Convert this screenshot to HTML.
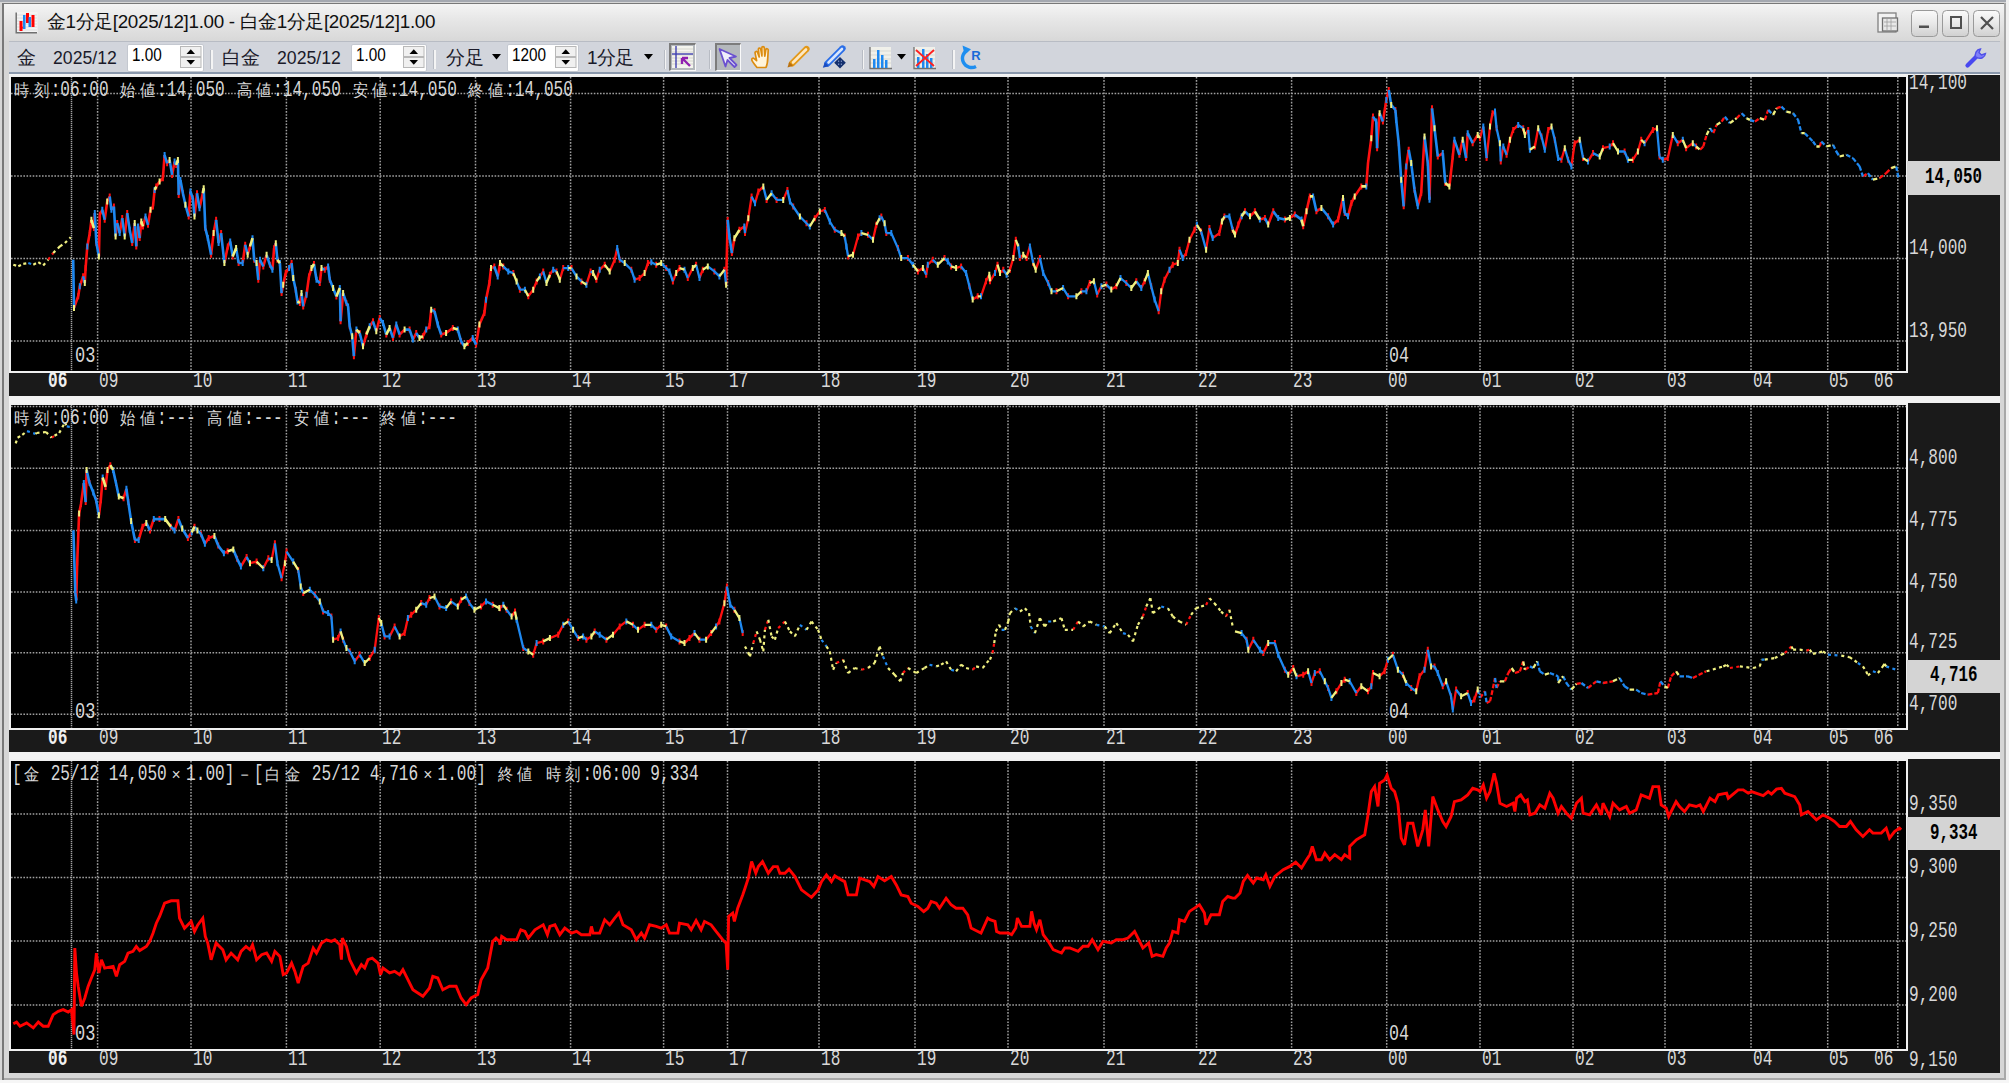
<!DOCTYPE html><html><head><meta charset="utf-8"><style>
*{margin:0;padding:0;box-sizing:border-box}
html,body{width:2009px;height:1083px;overflow:hidden;background:#c9c9c9;position:relative}
.a{position:absolute}
.mono{position:absolute;font-family:"Liberation Mono",monospace;line-height:1;white-space:pre;transform-origin:0 0}
.w2{display:inline-block;width:25.80px;text-align:center;font-size:0.8em;transform:scaleX(1.2);transform-origin:50% 50%}
.ui{position:absolute;font-family:"Liberation Sans",sans-serif;white-space:pre;line-height:1}
</style></head><body>
<div class="a" style="left:0px;top:0px;width:2009px;height:1083px;background:#d6d6d6"></div>
<div class="a" style="left:0px;top:0px;width:2009px;height:2px;background:#a4a8b0"></div>
<div class="a" style="left:2px;top:2.5px;width:2005px;height:1.5px;background:#787878"></div>
<div class="a" style="left:1.5px;top:2.5px;width:2.5px;height:1079px;background:#787878"></div>
<div class="a" style="left:2004px;top:2.5px;width:2px;height:1079px;background:#a8a8a8"></div>
<div class="a" style="left:2006px;top:0px;width:3px;height:1083px;background:#f0f0f0"></div>
<div class="a" style="left:0px;top:1080px;width:2009px;height:3px;background:#f6f6f6"></div>
<div class="a" style="left:4px;top:1078px;width:2001px;height:2px;background:#a8a8a8"></div>
<div class="a" style="left:4px;top:4px;width:2000px;height:37px;background:linear-gradient(#f4f4f4,#e6e6e6 45%,#d8d8d8)"></div>
<div class="a" style="left:9px;top:41px;width:1991px;height:32px;background:#d2d5dc;border-top:1px solid #b8bcc4"></div>
<div class="a" style="left:9px;top:72px;width:1991px;height:1.5px;background:#8a98ac"></div>
<div class="a" style="left:9px;top:73.5px;width:1991px;height:3.5px;background:#f4f4f4"></div>
<div class="a" style="left:9px;top:75px;width:1899px;height:297.5px;background:#f0f0f0"></div>
<div class="a" style="left:11px;top:77px;width:1895px;height:293.5px;background:#000"></div>
<div class="a" style="left:1908px;top:75px;width:92px;height:321px;background:#1a1a1a"></div>
<div class="a" style="left:9px;top:372.5px;width:1991px;height:23.5px;background:#1a1a1a"></div>
<div class="a" style="left:9px;top:396px;width:1991px;height:7px;background:#f2f2f2"></div>
<div class="a" style="left:9px;top:403px;width:1899px;height:326.5px;background:#f0f0f0"></div>
<div class="a" style="left:11px;top:405px;width:1895px;height:322.5px;background:#000"></div>
<div class="a" style="left:1908px;top:403px;width:92px;height:348.5px;background:#1a1a1a"></div>
<div class="a" style="left:9px;top:729.5px;width:1991px;height:22.0px;background:#1a1a1a"></div>
<div class="a" style="left:9px;top:751.5px;width:1991px;height:7px;background:#f2f2f2"></div>
<div class="a" style="left:9px;top:759px;width:1899px;height:291.5px;background:#f0f0f0"></div>
<div class="a" style="left:11px;top:761px;width:1895px;height:287.5px;background:#000"></div>
<div class="a" style="left:1908px;top:759px;width:92px;height:314px;background:#1a1a1a"></div>
<div class="a" style="left:9px;top:1050.5px;width:1991px;height:22.5px;background:#1a1a1a"></div>
<svg class="a" style="left:0;top:0" width="2009" height="1083" viewBox="0 0 2009 1083">
<line x1="11" y1="93.4" x2="1906" y2="93.4" stroke="#a0a0a0" stroke-width="1.5" stroke-dasharray="1.6 1.5"/>
<line x1="11" y1="176" x2="1906" y2="176" stroke="#a0a0a0" stroke-width="1.5" stroke-dasharray="1.6 1.5"/>
<line x1="11" y1="258.6" x2="1906" y2="258.6" stroke="#a0a0a0" stroke-width="1.5" stroke-dasharray="1.6 1.5"/>
<line x1="11" y1="341" x2="1906" y2="341" stroke="#a0a0a0" stroke-width="1.5" stroke-dasharray="1.6 1.5"/>
<line x1="71.5" y1="77" x2="71.5" y2="370.5" stroke="#a0a0a0" stroke-width="1.5" stroke-dasharray="1.2 0.8"/>
<line x1="97.6" y1="77" x2="97.6" y2="370.5" stroke="#a0a0a0" stroke-width="1.5" stroke-dasharray="1.6 1.5"/>
<line x1="191" y1="77" x2="191" y2="370.5" stroke="#a0a0a0" stroke-width="1.5" stroke-dasharray="1.6 1.5"/>
<line x1="286.4" y1="77" x2="286.4" y2="370.5" stroke="#a0a0a0" stroke-width="1.5" stroke-dasharray="1.6 1.5"/>
<line x1="380.2" y1="77" x2="380.2" y2="370.5" stroke="#a0a0a0" stroke-width="1.5" stroke-dasharray="1.6 1.5"/>
<line x1="475.5" y1="77" x2="475.5" y2="370.5" stroke="#a0a0a0" stroke-width="1.5" stroke-dasharray="1.6 1.5"/>
<line x1="570.6" y1="77" x2="570.6" y2="370.5" stroke="#a0a0a0" stroke-width="1.5" stroke-dasharray="1.6 1.5"/>
<line x1="663.6" y1="77" x2="663.6" y2="370.5" stroke="#a0a0a0" stroke-width="1.5" stroke-dasharray="1.6 1.5"/>
<line x1="727.5" y1="77" x2="727.5" y2="370.5" stroke="#a0a0a0" stroke-width="1.5" stroke-dasharray="1.6 1.5"/>
<line x1="819" y1="77" x2="819" y2="370.5" stroke="#a0a0a0" stroke-width="1.5" stroke-dasharray="1.6 1.5"/>
<line x1="915" y1="77" x2="915" y2="370.5" stroke="#a0a0a0" stroke-width="1.5" stroke-dasharray="1.6 1.5"/>
<line x1="1008" y1="77" x2="1008" y2="370.5" stroke="#a0a0a0" stroke-width="1.5" stroke-dasharray="1.6 1.5"/>
<line x1="1104" y1="77" x2="1104" y2="370.5" stroke="#a0a0a0" stroke-width="1.5" stroke-dasharray="1.6 1.5"/>
<line x1="1196.5" y1="77" x2="1196.5" y2="370.5" stroke="#a0a0a0" stroke-width="1.5" stroke-dasharray="1.6 1.5"/>
<line x1="1291.6" y1="77" x2="1291.6" y2="370.5" stroke="#a0a0a0" stroke-width="1.5" stroke-dasharray="1.6 1.5"/>
<line x1="1386.7" y1="77" x2="1386.7" y2="370.5" stroke="#a0a0a0" stroke-width="1.5" stroke-dasharray="1.6 1.5"/>
<line x1="1480" y1="77" x2="1480" y2="370.5" stroke="#a0a0a0" stroke-width="1.5" stroke-dasharray="1.6 1.5"/>
<line x1="1573" y1="77" x2="1573" y2="370.5" stroke="#a0a0a0" stroke-width="1.5" stroke-dasharray="1.6 1.5"/>
<line x1="1665" y1="77" x2="1665" y2="370.5" stroke="#a0a0a0" stroke-width="1.5" stroke-dasharray="1.6 1.5"/>
<line x1="1751" y1="77" x2="1751" y2="370.5" stroke="#a0a0a0" stroke-width="1.5" stroke-dasharray="1.6 1.5"/>
<line x1="1827.7" y1="77" x2="1827.7" y2="370.5" stroke="#a0a0a0" stroke-width="1.5" stroke-dasharray="1.6 1.5"/>
<line x1="1897.8" y1="77" x2="1897.8" y2="370.5" stroke="#a0a0a0" stroke-width="1.5" stroke-dasharray="1.6 1.5"/>
<line x1="11" y1="406.5" x2="1906" y2="406.5" stroke="#a0a0a0" stroke-width="1.5" stroke-dasharray="1.6 1.5"/>
<line x1="11" y1="468.2" x2="1906" y2="468.2" stroke="#a0a0a0" stroke-width="1.5" stroke-dasharray="1.6 1.5"/>
<line x1="11" y1="530.4" x2="1906" y2="530.4" stroke="#a0a0a0" stroke-width="1.5" stroke-dasharray="1.6 1.5"/>
<line x1="11" y1="592" x2="1906" y2="592" stroke="#a0a0a0" stroke-width="1.5" stroke-dasharray="1.6 1.5"/>
<line x1="11" y1="652.8" x2="1906" y2="652.8" stroke="#a0a0a0" stroke-width="1.5" stroke-dasharray="1.6 1.5"/>
<line x1="11" y1="714.3" x2="1906" y2="714.3" stroke="#a0a0a0" stroke-width="1.5" stroke-dasharray="1.6 1.5"/>
<line x1="71.5" y1="405" x2="71.5" y2="727.5" stroke="#a0a0a0" stroke-width="1.5" stroke-dasharray="1.2 0.8"/>
<line x1="97.6" y1="405" x2="97.6" y2="727.5" stroke="#a0a0a0" stroke-width="1.5" stroke-dasharray="1.6 1.5"/>
<line x1="191" y1="405" x2="191" y2="727.5" stroke="#a0a0a0" stroke-width="1.5" stroke-dasharray="1.6 1.5"/>
<line x1="286.4" y1="405" x2="286.4" y2="727.5" stroke="#a0a0a0" stroke-width="1.5" stroke-dasharray="1.6 1.5"/>
<line x1="380.2" y1="405" x2="380.2" y2="727.5" stroke="#a0a0a0" stroke-width="1.5" stroke-dasharray="1.6 1.5"/>
<line x1="475.5" y1="405" x2="475.5" y2="727.5" stroke="#a0a0a0" stroke-width="1.5" stroke-dasharray="1.6 1.5"/>
<line x1="570.6" y1="405" x2="570.6" y2="727.5" stroke="#a0a0a0" stroke-width="1.5" stroke-dasharray="1.6 1.5"/>
<line x1="663.6" y1="405" x2="663.6" y2="727.5" stroke="#a0a0a0" stroke-width="1.5" stroke-dasharray="1.6 1.5"/>
<line x1="727.5" y1="405" x2="727.5" y2="727.5" stroke="#a0a0a0" stroke-width="1.5" stroke-dasharray="1.6 1.5"/>
<line x1="819" y1="405" x2="819" y2="727.5" stroke="#a0a0a0" stroke-width="1.5" stroke-dasharray="1.6 1.5"/>
<line x1="915" y1="405" x2="915" y2="727.5" stroke="#a0a0a0" stroke-width="1.5" stroke-dasharray="1.6 1.5"/>
<line x1="1008" y1="405" x2="1008" y2="727.5" stroke="#a0a0a0" stroke-width="1.5" stroke-dasharray="1.6 1.5"/>
<line x1="1104" y1="405" x2="1104" y2="727.5" stroke="#a0a0a0" stroke-width="1.5" stroke-dasharray="1.6 1.5"/>
<line x1="1196.5" y1="405" x2="1196.5" y2="727.5" stroke="#a0a0a0" stroke-width="1.5" stroke-dasharray="1.6 1.5"/>
<line x1="1291.6" y1="405" x2="1291.6" y2="727.5" stroke="#a0a0a0" stroke-width="1.5" stroke-dasharray="1.6 1.5"/>
<line x1="1386.7" y1="405" x2="1386.7" y2="727.5" stroke="#a0a0a0" stroke-width="1.5" stroke-dasharray="1.6 1.5"/>
<line x1="1480" y1="405" x2="1480" y2="727.5" stroke="#a0a0a0" stroke-width="1.5" stroke-dasharray="1.6 1.5"/>
<line x1="1573" y1="405" x2="1573" y2="727.5" stroke="#a0a0a0" stroke-width="1.5" stroke-dasharray="1.6 1.5"/>
<line x1="1665" y1="405" x2="1665" y2="727.5" stroke="#a0a0a0" stroke-width="1.5" stroke-dasharray="1.6 1.5"/>
<line x1="1751" y1="405" x2="1751" y2="727.5" stroke="#a0a0a0" stroke-width="1.5" stroke-dasharray="1.6 1.5"/>
<line x1="1827.7" y1="405" x2="1827.7" y2="727.5" stroke="#a0a0a0" stroke-width="1.5" stroke-dasharray="1.6 1.5"/>
<line x1="1897.8" y1="405" x2="1897.8" y2="727.5" stroke="#a0a0a0" stroke-width="1.5" stroke-dasharray="1.6 1.5"/>
<line x1="11" y1="814" x2="1906" y2="814" stroke="#a0a0a0" stroke-width="1.5" stroke-dasharray="1.6 1.5"/>
<line x1="11" y1="877.5" x2="1906" y2="877.5" stroke="#a0a0a0" stroke-width="1.5" stroke-dasharray="1.6 1.5"/>
<line x1="11" y1="941" x2="1906" y2="941" stroke="#a0a0a0" stroke-width="1.5" stroke-dasharray="1.6 1.5"/>
<line x1="11" y1="1005" x2="1906" y2="1005" stroke="#a0a0a0" stroke-width="1.5" stroke-dasharray="1.6 1.5"/>
<line x1="71.5" y1="761" x2="71.5" y2="1048.5" stroke="#a0a0a0" stroke-width="1.5" stroke-dasharray="1.2 0.8"/>
<line x1="97.6" y1="761" x2="97.6" y2="1048.5" stroke="#a0a0a0" stroke-width="1.5" stroke-dasharray="1.6 1.5"/>
<line x1="191" y1="761" x2="191" y2="1048.5" stroke="#a0a0a0" stroke-width="1.5" stroke-dasharray="1.6 1.5"/>
<line x1="286.4" y1="761" x2="286.4" y2="1048.5" stroke="#a0a0a0" stroke-width="1.5" stroke-dasharray="1.6 1.5"/>
<line x1="380.2" y1="761" x2="380.2" y2="1048.5" stroke="#a0a0a0" stroke-width="1.5" stroke-dasharray="1.6 1.5"/>
<line x1="475.5" y1="761" x2="475.5" y2="1048.5" stroke="#a0a0a0" stroke-width="1.5" stroke-dasharray="1.6 1.5"/>
<line x1="570.6" y1="761" x2="570.6" y2="1048.5" stroke="#a0a0a0" stroke-width="1.5" stroke-dasharray="1.6 1.5"/>
<line x1="663.6" y1="761" x2="663.6" y2="1048.5" stroke="#a0a0a0" stroke-width="1.5" stroke-dasharray="1.6 1.5"/>
<line x1="727.5" y1="761" x2="727.5" y2="1048.5" stroke="#a0a0a0" stroke-width="1.5" stroke-dasharray="1.6 1.5"/>
<line x1="819" y1="761" x2="819" y2="1048.5" stroke="#a0a0a0" stroke-width="1.5" stroke-dasharray="1.6 1.5"/>
<line x1="915" y1="761" x2="915" y2="1048.5" stroke="#a0a0a0" stroke-width="1.5" stroke-dasharray="1.6 1.5"/>
<line x1="1008" y1="761" x2="1008" y2="1048.5" stroke="#a0a0a0" stroke-width="1.5" stroke-dasharray="1.6 1.5"/>
<line x1="1104" y1="761" x2="1104" y2="1048.5" stroke="#a0a0a0" stroke-width="1.5" stroke-dasharray="1.6 1.5"/>
<line x1="1196.5" y1="761" x2="1196.5" y2="1048.5" stroke="#a0a0a0" stroke-width="1.5" stroke-dasharray="1.6 1.5"/>
<line x1="1291.6" y1="761" x2="1291.6" y2="1048.5" stroke="#a0a0a0" stroke-width="1.5" stroke-dasharray="1.6 1.5"/>
<line x1="1386.7" y1="761" x2="1386.7" y2="1048.5" stroke="#a0a0a0" stroke-width="1.5" stroke-dasharray="1.6 1.5"/>
<line x1="1480" y1="761" x2="1480" y2="1048.5" stroke="#a0a0a0" stroke-width="1.5" stroke-dasharray="1.6 1.5"/>
<line x1="1573" y1="761" x2="1573" y2="1048.5" stroke="#a0a0a0" stroke-width="1.5" stroke-dasharray="1.6 1.5"/>
<line x1="1665" y1="761" x2="1665" y2="1048.5" stroke="#a0a0a0" stroke-width="1.5" stroke-dasharray="1.6 1.5"/>
<line x1="1751" y1="761" x2="1751" y2="1048.5" stroke="#a0a0a0" stroke-width="1.5" stroke-dasharray="1.6 1.5"/>
<line x1="1827.7" y1="761" x2="1827.7" y2="1048.5" stroke="#a0a0a0" stroke-width="1.5" stroke-dasharray="1.6 1.5"/>
<line x1="1897.8" y1="761" x2="1897.8" y2="1048.5" stroke="#a0a0a0" stroke-width="1.5" stroke-dasharray="1.6 1.5"/>
<clipPath id="c1"><rect x="11" y="77" width="1895" height="293.5"/></clipPath>
<clipPath id="c2"><rect x="11" y="405" width="1895" height="322.5"/></clipPath>
<clipPath id="c3"><rect x="11" y="761" width="1895" height="287.5"/></clipPath>
<g clip-path="url(#c1)"><path d="M74.0 307.9L78.2 296.2M78.2 296.2L79.8 286.3M79.8 286.3L83.1 276.3M84.8 283.0L85.6 268.0M85.6 268.0L87.3 246.4M87.3 246.4L89.8 233.1M89.8 233.1L91.4 219.8M93.9 228.1L94.8 213.1M98.9 256.4L99.8 214.8M99.8 214.8L102.3 209.8M104.7 219.8L107.2 201.5M107.2 201.5L109.7 196.5M111.4 209.8L113.9 206.5M115.6 236.4L117.2 223.1M119.7 233.1L122.2 218.1M124.7 236.4L127.2 213.1M132.2 243.1L134.7 223.1M136.3 246.4L138.0 226.4M139.7 238.1L141.3 221.4M143.0 226.4L145.5 216.5M148.0 224.8L150.5 209.8M150.5 209.8L153.0 206.5M153.0 206.5L154.6 189.9M156.3 186.5L159.6 181.6M159.6 181.6L162.9 178.2M162.9 178.2L164.6 155.0M167.1 163.3L169.6 159.9M172.1 174.9L174.6 161.6M178.7 194.9L180.4 179.9M188.7 216.5L190.4 191.5M194.5 216.5L197.0 193.2M199.5 208.2L202.8 193.2M211.1 254.7L213.6 233.1M213.6 233.1L216.1 219.8M218.6 243.1L221.1 233.1M224.4 263.0L227.8 246.4M227.8 246.4L230.2 241.4M242.7 263.0L245.2 244.7M247.7 254.7L250.0 246.5M258.3 279.8L260.0 259.8M263.3 266.5L266.6 254.8M272.4 269.8L274.1 248.2M274.1 248.2L275.8 243.2M281.6 293.1L283.2 284.7M283.2 284.7L285.7 273.1M285.7 273.1L289.1 268.1M289.1 268.1L291.6 263.1M299.9 303.0L301.5 293.1M303.2 306.4L306.5 294.7M306.5 294.7L309.0 276.4M309.0 276.4L311.5 268.1M319.8 283.1L321.5 268.1M324.8 269.8L328.1 266.5M340.6 321.3L343.1 293.1M353.9 356.2L356.4 329.6M363.0 346.2L366.4 334.6M369.7 326.3L373.0 321.3M376.3 331.3L379.7 318.0M393.0 337.9L396.3 324.6M399.6 334.6L404.6 329.6M412.9 339.6L416.2 333.0M422.9 336.3L426.2 329.6M426.2 329.6L429.5 326.3M429.5 326.3L431.2 309.7M441.2 334.6L446.1 333.0M446.1 333.0L452.8 328.0M467.8 342.9L472.7 337.9M476.1 344.6L479.4 324.6M479.4 324.6L484.4 313.0M484.4 313.0L486.0 299.7M486.0 299.7L489.4 283.1M489.4 283.1L491.0 268.1M491.0 268.1L494.3 266.5M497.7 276.4L499.3 268.1M726.1 284.7L727.7 219.9M731.9 253.1L734.4 238.2M739.4 229.8L744.3 226.5M1235.0 234.6L1238.3 224.6M1238.3 224.6L1241.6 216.3M1250.0 216.3L1254.9 211.3M1259.9 219.6L1264.9 218.0M1268.2 224.6L1273.2 211.3M1289.9 218.0L1294.8 214.6M1303.2 226.3L1306.5 211.3M1306.5 211.3L1309.8 196.4M1316.4 211.3L1321.4 208.0M1333.1 224.6L1338.1 219.6M1338.1 219.6L1343.0 198.0M1348.0 216.3L1351.4 203.0M1351.4 203.0L1354.7 196.4M1354.7 196.4L1361.3 186.4M1366.3 186.4L1368.0 163.1M1368.0 163.1L1371.3 138.2M1371.3 138.2L1373.0 116.6M1377.1 148.2L1379.6 113.2M1382.9 121.6L1386.3 99.9M1386.3 99.9L1388.8 90.0M1403.7 206.3L1406.2 166.4M1406.2 166.4L1408.7 149.8M1417.8 206.3L1421.2 193.0M1421.2 193.0L1424.5 136.5M1429.5 199.7L1432.0 108.3M1437.8 156.5L1442.8 153.1M1449.4 186.4L1452.8 156.5M1452.8 156.5L1454.4 139.8M1459.4 154.8L1462.7 139.8M1466.1 158.1L1467.7 133.2M1472.7 143.2L1477.7 134.9" fill="none" stroke="#ff1010" stroke-width="2.6" stroke-linejoin="miter" stroke-linecap="butt"/>
<path d="M499.3 268.1L500.0 263.1M528.3 296.3L533.2 289.7M533.2 289.7L536.6 281.4M539.9 276.4L543.2 271.4M549.9 274.7L553.2 269.7M559.8 279.7L563.2 268.1M586.4 284.7L590.6 271.4M596.4 279.7L599.7 269.7M599.7 269.7L604.7 264.7M609.7 271.4L614.7 259.8M614.7 259.8L617.2 248.1M634.6 279.7L639.6 278.0M639.6 278.0L644.6 273.1M644.6 273.1L647.9 263.1M647.9 263.1L651.3 262.3M672.9 281.4L676.2 273.1M676.2 273.1L679.5 268.1M687.8 278.0L692.8 268.1M699.5 278.0L702.8 269.7M745.0 233.1L748.3 218.2M748.3 218.2L751.6 196.6M755.0 203.2L758.3 191.6M758.3 191.6L763.3 186.6M783.2 199.9L787.4 189.9M814.8 218.2L819.8 211.5M819.8 211.5L824.8 209.9M853.0 254.7L858.0 236.5M858.0 236.5L861.4 233.1M873.0 239.8L876.3 224.8M879.6 218.2L881.3 216.5M917.9 271.4L922.9 268.0M926.2 274.7L927.8 264.7M927.8 264.7L932.8 259.7M956.1 268.0L961.1 266.4M972.7 299.6L977.7 296.3M981.0 296.3L986.0 281.3M986.0 281.3L989.3 274.7M990.0 281.3L995.0 273.0M995.0 273.0L997.5 264.7M1000.0 273.0L1003.3 269.7M1009.9 269.7L1013.3 258.0M1013.3 258.0L1015.8 239.8M1019.9 258.0L1023.2 254.7M1026.6 258.0L1029.9 246.4M1035.7 269.7L1039.9 258.0M1086.4 291.3L1089.7 283.0M1097.2 294.6L1101.4 286.3M1111.3 289.6L1116.3 286.3M1141.3 288.0L1144.6 281.3M1158.7 311.2L1161.2 291.3M1161.2 291.3L1164.5 279.7M1164.5 279.7L1169.5 269.7M1169.5 269.7L1172.8 264.7M1172.8 264.7L1177.8 263.0M1177.8 263.0L1179.5 249.7M1182.8 258.0L1186.1 253.1M1186.1 253.1L1189.5 239.8M1189.5 239.8L1194.5 229.8M1194.5 229.8L1196.9 224.8M1206.1 249.7L1209.4 228.1M1212.7 238.1L1219.4 233.1M1219.4 233.1L1221.9 221.5M1480.0 138.2L1483.3 126.5M1486.6 158.1L1490.0 126.5M1490.0 126.5L1492.5 113.2M1492.5 113.2L1495.0 111.6M1500.8 161.4L1503.3 146.5M1506.6 154.8L1509.9 139.8M1509.9 139.8L1513.2 129.9M1513.2 129.9L1518.2 124.9M1524.9 134.9L1528.2 129.9M1534.9 146.5L1538.2 128.2M1544.8 149.8L1548.2 129.9M1548.2 129.9L1551.5 126.5M1561.4 159.8L1564.8 148.2M1571.4 166.4L1574.7 143.2M1574.7 143.2L1579.7 139.8M1588.0 161.4L1593.0 153.1M1603.0 148.2L1609.7 146.5M1609.7 146.5L1613.0 143.2M1632.9 159.8L1637.9 151.5M1637.9 151.5L1641.2 139.8M1644.6 143.2L1652.9 129.9M1652.9 129.9L1657.0 128.2M1662.8 159.8L1667.8 158.1M1667.8 158.1L1672.8 134.9M1677.8 143.2L1682.8 139.8M1686.1 148.2L1692.8 143.2" fill="none" stroke="#ff1010" stroke-width="2.3" stroke-linejoin="miter" stroke-linecap="butt"/>
<path d="M1700.0 149.8L1703.3 146.5M1703.3 146.5L1706.6 134.9M1713.3 133.2L1716.6 124.9M1721.6 121.6L1724.9 116.6M1736.6 118.2L1741.6 113.2M1754.9 121.6L1759.8 118.2M1764.8 119.9L1768.2 109.9M1776.5 108.3L1781.4 106.6M1819.7 146.5L1821.3 141.5M1862.9 176.4L1867.9 173.1M1879.5 178.1L1886.2 173.1M1886.2 173.1L1891.2 168.1" fill="none" stroke="#ff1010" stroke-width="2.3" stroke-dasharray="4.5 2" stroke-linejoin="miter" stroke-linecap="butt"/>
<path d="M48.2 259.7L53.2 253.0" fill="none" stroke="#ff1010" stroke-width="2.2" stroke-dasharray="3 3.5" stroke-linejoin="miter" stroke-linecap="butt"/>
<path d="M78.2 293.2V299.2M83.1 273.3V279.3M85.6 265.0V271.0M89.8 230.1V236.1M93.9 225.1V231.1M96.4 240.1V246.1M99.8 211.8V217.8M104.7 216.8V222.8M109.7 193.5V199.5M113.9 203.5V209.5M117.2 220.1V226.1M122.2 215.1V221.1M127.2 210.1V216.1M132.2 240.1V246.1M136.3 243.4V249.4M139.7 235.1V241.1M143.0 223.4V229.4M148.0 221.8V227.8M153.0 203.5V209.5M156.3 183.5V189.5M162.9 175.2V181.2M167.1 160.3V166.3M172.1 171.9V177.9M176.2 161.9V167.9M178.7 191.9V197.9M182.9 190.2V196.2M188.7 213.5V219.5M192.8 195.2V201.2M197.0 190.2V196.2M202.8 190.2V196.2M205.3 225.1V231.1M211.1 251.7V257.7M216.1 216.8V222.8M221.1 230.1V236.1M227.8 243.4V249.4M232.7 253.4V259.4M238.6 260.0V266.0M245.2 241.7V247.7M250.0 243.5V249.5M254.2 256.8V262.8M258.3 276.8V282.8M263.3 263.5V269.5M269.9 261.8V267.8M274.1 245.2V251.2M277.4 256.8V262.8M281.6 290.1V296.1M285.7 270.1V276.1M291.6 260.1V266.1M295.7 286.7V292.7M299.9 300.0V306.0M303.2 303.4V309.4M309.0 273.4V279.4M314.0 261.0V267.0M319.8 280.1V286.1M324.8 266.8V272.8M329.8 276.8V282.8M336.4 293.4V299.4M340.6 318.3V324.3M346.4 300.0V306.0M349.7 323.3V329.3M353.9 353.2V359.2M359.7 330.0V336.0M366.4 331.6V337.6M373.0 318.3V324.3M379.7 315.0V321.0M386.3 331.6V337.6M393.0 334.9V340.9M399.6 331.6V337.6M409.6 326.6V332.6M416.2 330.0V336.0M422.9 333.3V339.3M429.5 323.3V329.3M434.5 308.3V314.3M441.2 331.6V337.6M452.8 325.0V331.0M461.1 338.3V344.3M467.8 339.9V345.9M476.1 341.6V347.6M484.4 310.0V316.0M489.4 280.1V286.1M494.3 263.5V269.5M499.3 265.1V271.1M503.3 263.4V269.4M513.3 270.1V276.1M519.9 286.7V292.7M528.3 293.3V299.3M536.6 278.4V284.4M543.2 268.4V274.4M549.9 271.7V277.7M556.5 268.4V274.4M563.2 265.1V271.1M571.5 265.1V271.1M581.4 278.4V284.4M590.6 268.4V274.4M596.4 276.7V282.7M604.7 261.7V267.7M614.7 256.8V262.8M619.7 256.8V262.8M631.3 266.7V272.7M639.6 275.0V281.0M647.9 260.1V266.1M656.2 261.7V267.7M666.2 265.1V271.1M672.9 278.4V284.4M679.5 265.1V271.1M687.8 275.0V281.0M696.1 261.7V267.7M702.8 266.7V272.7M714.4 268.4V274.4M724.4 266.7V272.7M727.7 216.9V222.9M731.9 250.1V256.1M739.4 226.8V232.8M745.0 230.1V236.1M751.6 193.6V199.6M758.3 188.6V194.6M766.6 196.9V202.9M776.6 196.9V202.9M787.4 186.9V192.9M793.2 203.5V209.5M806.5 220.2V226.2M814.8 215.2V221.2M824.8 206.9V212.9M834.8 226.8V232.8M844.7 233.5V239.5M848.1 253.4V259.4M858.0 233.5V239.5M868.0 231.8V237.8M876.3 221.8V227.8M881.3 213.5V219.5M886.3 230.1V236.1M897.9 245.1V251.1M907.9 255.1V261.1M917.9 268.4V274.4M926.2 271.7V277.7M932.8 256.7V262.7M944.5 255.1V261.1M951.1 263.4V269.4M961.1 263.4V269.4M969.4 283.3V289.3M977.7 293.3V299.3M986.0 278.3V284.3M990.0 278.3V284.3M997.5 261.7V267.7M1003.3 266.7V272.7M1009.9 266.7V272.7M1015.8 236.8V242.8M1019.9 255.0V261.0M1026.6 255.0V261.0M1033.2 260.0V266.0M1039.9 255.0V261.0M1048.2 280.0V286.0M1056.5 288.3V294.3M1068.1 293.3V299.3M1081.4 288.3V294.3M1089.7 280.0V286.0M1097.2 291.6V297.6M1106.4 281.6V287.6M1116.3 283.3V289.3M1126.3 280.0V286.0M1136.3 278.3V284.3M1144.6 278.3V284.3M1151.2 283.3V289.3M1158.7 308.2V314.2M1164.5 276.7V282.7M1172.8 261.7V267.7M1179.5 246.7V252.7M1186.1 250.1V256.1M1194.5 226.8V232.8M1201.1 228.4V234.4M1209.4 225.1V231.1M1219.4 230.1V236.1M1224.4 213.5V219.5M1232.7 226.8V232.8M1238.3 221.6V227.6M1245.0 208.3V214.3M1254.9 208.3V214.3M1264.9 215.0V221.0M1273.2 208.3V214.3M1284.9 216.6V222.6M1294.8 211.6V217.6M1303.2 223.3V229.3M1309.8 193.4V199.4M1316.4 208.3V214.3M1328.1 213.3V219.3M1338.1 216.6V222.6M1344.7 210.0V216.0M1351.4 200.0V206.0M1361.3 183.4V189.4M1368.0 160.1V166.1M1373.0 113.6V119.6M1377.1 145.2V151.2M1382.9 118.6V124.6M1388.8 87.0V93.0M1395.4 106.9V112.9M1398.7 140.2V146.2M1403.7 203.3V209.3M1408.7 146.8V152.8M1414.5 186.7V192.7M1421.2 190.0V196.0M1427.8 160.1V166.1M1432.0 105.3V111.3M1437.8 153.5V159.5M1445.3 180.1V186.1M1452.8 153.5V159.5M1459.4 151.8V157.8M1466.1 155.1V161.1M1472.7 140.2V146.2M1480.0 135.2V141.2M1486.6 155.1V161.1M1492.5 110.2V116.2M1496.6 125.2V131.2M1500.8 158.4V164.4M1506.6 151.8V157.8M1513.2 126.9V132.9M1523.2 125.2V131.2M1528.2 126.9V132.9M1534.9 143.5V149.5M1541.5 133.5V139.5M1548.2 126.9V132.9M1554.8 136.8V142.8M1561.4 156.8V162.8M1568.1 156.8V162.8M1574.7 140.2V146.2M1583.1 155.1V161.1M1593.0 150.1V156.1M1603.0 145.2V151.2M1613.0 140.2V146.2M1624.6 148.5V154.5M1632.9 156.8V162.8M1641.2 136.8V142.8M1652.9 126.9V132.9M1659.5 153.5V159.5M1667.8 155.1V161.1M1677.8 140.2V146.2M1686.1 145.2V151.2M1696.1 143.5V149.5" fill="none" stroke="#ff1010" stroke-width="2" stroke-linejoin="miter" stroke-linecap="butt"/>
<path d="M73.2 259.7L74.0 307.9M83.1 276.3L84.8 283.0M94.8 213.1L96.4 243.1M96.4 243.1L98.9 256.4M102.3 209.8L104.7 219.8M109.7 196.5L111.4 209.8M113.9 206.5L115.6 236.4M117.2 223.1L119.7 233.1M122.2 218.1L124.7 236.4M127.2 213.1L129.7 229.8M129.7 229.8L132.2 243.1M134.7 223.1L136.3 246.4M138.0 226.4L139.7 238.1M145.5 216.5L148.0 224.8M164.6 155.0L167.1 163.3M169.6 159.9L172.1 174.9M174.6 161.6L176.2 164.9M177.9 159.9L178.7 194.9M180.4 179.9L182.9 193.2M182.9 193.2L185.4 204.8M185.4 204.8L188.7 216.5M190.4 191.5L192.8 198.2M192.8 198.2L194.5 216.5M197.0 193.2L199.5 208.2M203.7 188.2L205.3 228.1M205.3 228.1L207.8 238.1M207.8 238.1L211.1 254.7M216.1 219.8L218.6 243.1M221.1 233.1L224.4 263.0M230.2 241.4L232.7 256.4M236.1 248.0L238.6 263.0M238.6 263.0L242.7 263.0M245.2 244.7L247.7 254.7M252.5 238.2L254.2 259.8M254.2 259.8L256.6 263.1M256.6 263.1L258.3 279.8M260.0 259.8L263.3 266.5M266.6 254.8L269.9 264.8M269.9 264.8L272.4 269.8M275.8 243.2L277.4 259.8M279.9 263.1L281.6 293.1M291.6 263.1L293.2 278.1M293.2 278.1L295.7 289.7M295.7 289.7L297.4 301.4M301.5 293.1L303.2 306.4M314.0 264.0L316.5 279.8M316.5 279.8L319.8 283.1M321.5 268.1L324.8 269.8M328.1 266.5L329.8 279.8M329.8 279.8L333.1 288.1M333.1 288.1L336.4 296.4M339.8 288.1L340.6 321.3M343.1 293.1L346.4 303.0M346.4 303.0L348.1 306.4M348.1 306.4L349.7 326.3M349.7 326.3L352.2 336.3M352.2 336.3L353.9 356.2M359.7 333.0L363.0 346.2M373.0 321.3L376.3 331.3M379.7 318.0L383.0 323.0M383.0 323.0L386.3 334.6M389.6 328.0L393.0 337.9M396.3 324.6L399.6 334.6M404.6 329.6L409.6 329.6M409.6 329.6L412.9 339.6M416.2 333.0L419.5 337.9M431.2 309.7L434.5 311.3M434.5 311.3L437.8 324.6M437.8 324.6L441.2 334.6M457.8 329.6L461.1 341.3M461.1 341.3L464.4 346.2M472.7 337.9L476.1 344.6M494.3 266.5L497.7 276.4M727.7 219.9L729.4 236.5M729.4 236.5L731.9 253.1M1245.0 211.3L1250.0 216.3M1264.9 218.0L1268.2 224.6M1273.2 211.3L1278.2 218.0M1278.2 218.0L1284.9 219.6M1294.8 214.6L1301.5 219.6M1313.1 196.4L1316.4 211.3M1321.4 208.0L1328.1 216.3M1328.1 216.3L1333.1 224.6M1343.0 198.0L1344.7 213.0M1344.7 213.0L1348.0 216.3M1373.0 116.6L1376.3 121.6M1376.3 121.6L1377.1 148.2M1379.6 113.2L1382.9 121.6M1388.8 90.0L1391.2 104.9M1391.2 104.9L1395.4 109.9M1395.4 109.9L1396.2 119.9M1396.2 119.9L1398.7 143.2M1398.7 143.2L1401.2 179.7M1401.2 179.7L1403.7 206.3M1408.7 149.8L1411.2 163.1M1411.2 163.1L1414.5 189.7M1414.5 189.7L1417.8 206.3M1424.5 136.5L1427.8 163.1M1427.8 163.1L1429.5 199.7M1432.0 108.3L1434.5 128.2M1434.5 128.2L1437.8 156.5M1442.8 153.1L1445.3 183.1M1454.4 139.8L1459.4 154.8M1462.7 139.8L1466.1 158.1M1467.7 133.2L1472.7 143.2" fill="none" stroke="#1e88f0" stroke-width="2.6" stroke-linejoin="miter" stroke-linecap="butt"/>
<path d="M503.3 266.4L508.3 271.4M508.3 271.4L513.3 273.1M516.6 281.4L519.9 289.7M519.9 289.7L524.9 289.7M543.2 271.4L546.5 283.0M553.2 269.7L556.5 271.4M563.2 268.1L568.2 268.1M571.5 268.1L576.5 276.4M576.5 276.4L581.4 281.4M590.6 271.4L593.1 273.1M617.2 248.1L619.7 259.8M619.7 259.8L624.7 263.1M624.7 263.1L631.3 269.7M631.3 269.7L634.6 279.7M651.3 262.3L656.2 264.7M661.2 263.1L666.2 268.1M666.2 268.1L669.5 271.4M669.5 271.4L672.9 281.4M684.5 269.7L687.8 278.0M696.1 264.7L699.5 278.0M707.8 266.4L714.4 271.4M714.4 271.4L719.4 276.4M724.4 269.7L726.1 284.7M744.3 226.5L745.0 233.1M751.6 196.6L755.0 203.2M763.3 186.6L766.6 199.9M771.6 193.2L776.6 199.9M776.6 199.9L783.2 199.9M787.4 189.9L789.9 201.6M789.9 201.6L793.2 206.5M793.2 206.5L799.9 216.5M799.9 216.5L806.5 223.2M806.5 223.2L809.8 226.5M824.8 209.9L829.8 221.5M829.8 221.5L834.8 229.8M834.8 229.8L841.4 233.1M844.7 236.5L846.4 246.4M846.4 246.4L848.1 256.4M868.0 234.8L873.0 239.8M881.3 216.5L884.6 223.2M884.6 223.2L886.3 233.1M886.3 233.1L891.3 233.1M891.3 233.1L897.9 248.1M897.9 248.1L901.2 258.1M901.2 258.1L907.9 258.1M907.9 258.1L912.9 264.7M922.9 268.0L926.2 274.7M932.8 259.7L937.8 264.7M944.5 258.1L947.8 261.4M947.8 261.4L951.1 266.4M961.1 266.4L966.1 273.0M966.1 273.0L969.4 286.3M969.4 286.3L972.7 299.6M1003.3 269.7L1006.6 274.7M1018.3 246.4L1019.9 258.0M1029.9 246.4L1033.2 263.0M1039.9 258.0L1043.2 273.0M1043.2 273.0L1048.2 283.0M1048.2 283.0L1051.5 291.3M1051.5 291.3L1056.5 291.3M1063.1 288.0L1068.1 296.3M1068.1 296.3L1076.4 296.3M1081.4 291.3L1086.4 291.3M1093.9 281.3L1097.2 294.6M1106.4 284.6L1111.3 289.6M1120.5 278.0L1126.3 283.0M1126.3 283.0L1131.3 288.0M1136.3 281.3L1141.3 288.0M1147.9 273.0L1151.2 286.3M1151.2 286.3L1154.6 299.6M1154.6 299.6L1158.7 311.2M1179.5 249.7L1182.8 258.0M1201.1 231.4L1206.1 249.7M1209.4 228.1L1212.7 238.1M1224.4 216.5L1229.4 216.5M1229.4 216.5L1232.7 229.8M1483.3 126.5L1486.6 158.1M1495.0 111.6L1496.6 128.2M1496.6 128.2L1499.9 143.2M1499.9 143.2L1500.8 161.4M1503.3 146.5L1506.6 154.8M1518.2 124.9L1523.2 128.2M1528.2 129.9L1529.9 149.8M1538.2 128.2L1541.5 136.5M1541.5 136.5L1544.8 149.8M1551.5 126.5L1554.8 139.8M1554.8 139.8L1558.1 158.1M1558.1 158.1L1561.4 159.8M1564.8 148.2L1568.1 159.8M1568.1 159.8L1571.4 166.4M1579.7 139.8L1583.1 158.1M1593.0 153.1L1599.7 156.5M1618.0 151.5L1624.6 151.5M1624.6 151.5L1627.9 159.8M1657.0 128.2L1659.5 156.5M1659.5 156.5L1662.8 159.8M1672.8 134.9L1677.8 143.2M1692.8 143.2L1696.1 146.5" fill="none" stroke="#1e88f0" stroke-width="2.3" stroke-linejoin="miter" stroke-linecap="butt"/>
<path d="M1710.0 128.2L1713.3 133.2M1724.9 116.6L1729.9 123.2M1741.6 113.2L1746.5 118.2M1749.9 119.9L1754.9 121.6M1768.2 109.9L1773.1 114.9M1781.4 106.6L1786.4 111.6M1793.1 113.2L1798.1 119.9M1798.1 119.9L1801.4 133.2M1804.7 133.2L1813.0 141.5M1813.0 141.5L1816.4 146.5M1821.3 141.5L1826.3 146.5M1833.0 144.8L1836.3 151.5M1836.3 151.5L1839.6 156.5M1846.3 154.8L1852.9 158.1M1852.9 158.1L1859.6 166.4M1859.6 166.4L1862.9 176.4M1867.9 173.1L1872.9 179.7M1896.1 166.4L1898.6 178.1" fill="none" stroke="#1e88f0" stroke-width="2.3" stroke-dasharray="4.5 2" stroke-linejoin="miter" stroke-linecap="butt"/>
<path d="M28.3 263.0L33.3 264.7" fill="none" stroke="#1e88f0" stroke-width="2.2" stroke-dasharray="3 3.5" stroke-linejoin="miter" stroke-linecap="butt"/>
<path d="M79.8 283.3V289.3M87.3 243.4V249.4M94.8 210.1V216.1M102.3 206.8V212.8M111.4 206.8V212.8M119.7 230.1V236.1M129.7 226.8V232.8M138.0 223.4V229.4M145.5 213.5V219.5M154.6 186.9V192.9M164.6 152.0V158.0M174.6 158.6V164.6M180.4 176.9V182.9M190.4 188.5V194.5M199.5 205.2V211.2M207.8 235.1V241.1M218.6 240.1V246.1M230.2 238.4V244.4M242.7 260.0V266.0M252.5 235.2V241.2M260.0 256.8V262.8M272.4 266.8V272.8M279.9 260.1V266.1M289.1 265.1V271.1M297.4 298.4V304.4M306.5 291.7V297.7M316.5 276.8V282.8M328.1 263.5V269.5M339.8 285.1V291.1M348.1 303.4V309.4M356.4 326.6V332.6M369.7 323.3V329.3M383.0 320.0V326.0M396.3 321.6V327.6M412.9 336.6V342.6M426.2 326.6V332.6M437.8 321.6V327.6M457.8 326.6V332.6M472.7 334.9V340.9M486.0 296.7V302.7M497.7 273.4V279.4M508.3 268.4V274.4M524.9 286.7V292.7M539.9 273.4V279.4M553.2 266.7V272.7M568.2 265.1V271.1M586.4 281.7V287.7M599.7 266.7V272.7M617.2 245.1V251.1M634.6 276.7V282.7M651.3 259.3V265.3M669.5 268.4V274.4M684.5 266.7V272.7M699.5 275.0V281.0M719.4 273.4V279.4M729.4 233.5V239.5M744.3 223.5V229.5M755.0 200.2V206.2M771.6 190.2V196.2M789.9 198.6V204.6M809.8 223.5V229.5M829.8 218.5V224.5M846.4 243.4V249.4M861.4 230.1V236.1M879.6 215.2V221.2M891.3 230.1V236.1M912.9 261.7V267.7M927.8 261.7V267.7M947.8 258.4V264.4M966.1 270.0V276.0M981.0 293.3V299.3M995.0 270.0V276.0M1006.6 271.7V277.7M1018.3 243.4V249.4M1029.9 243.4V249.4M1043.2 270.0V276.0M1063.1 285.0V291.0M1086.4 288.3V294.3M1101.4 283.3V289.3M1120.5 275.0V281.0M1141.3 285.0V291.0M1154.6 296.6V302.6M1169.5 266.7V272.7M1182.8 255.0V261.0M1196.9 221.8V227.8M1212.7 235.1V241.1M1229.4 213.5V219.5M1241.6 213.3V219.3M1259.9 216.6V222.6M1278.2 215.0V221.0M1301.5 216.6V222.6M1313.1 193.4V199.4M1333.1 221.6V227.6M1348.0 213.3V219.3M1366.3 183.4V189.4M1376.3 118.6V124.6M1386.3 96.9V102.9M1396.2 116.9V122.9M1406.2 163.4V169.4M1417.8 203.3V209.3M1429.5 196.7V202.7M1442.8 150.1V156.1M1454.4 136.8V142.8M1467.7 130.2V136.2M1483.3 123.5V129.5M1495.0 108.6V114.6M1503.3 143.5V149.5M1518.2 121.9V127.9M1529.9 146.8V152.8M1544.8 146.8V152.8M1558.1 155.1V161.1M1571.4 163.4V169.4M1588.0 158.4V164.4M1609.7 143.5V149.5M1627.9 156.8V162.8M1644.6 140.2V146.2M1662.8 156.8V162.8M1682.8 136.8V142.8" fill="none" stroke="#1e88f0" stroke-width="2" stroke-linejoin="miter" stroke-linecap="butt"/>
<path d="M91.4 219.8L93.9 228.1M141.3 221.4L143.0 226.4M154.6 189.9L156.3 186.5M176.2 164.9L177.9 159.9M202.8 193.2L203.7 188.2M232.7 256.4L236.1 248.0M250.0 246.5L252.5 238.2M277.4 259.8L279.9 263.1M297.4 301.4L299.9 303.0M311.5 268.1L314.0 264.0M336.4 296.4L339.8 288.1M356.4 329.6L359.7 333.0M366.4 334.6L369.7 326.3M386.3 334.6L389.6 328.0M419.5 337.9L422.9 336.3M452.8 328.0L457.8 329.6M464.4 346.2L467.8 342.9M734.4 238.2L739.4 229.8M1232.7 229.8L1235.0 234.6M1241.6 216.3L1245.0 211.3M1254.9 211.3L1259.9 219.6M1284.9 219.6L1289.9 218.0M1301.5 219.6L1303.2 226.3M1309.8 196.4L1313.1 196.4M1361.3 186.4L1366.3 186.4M1445.3 183.1L1449.4 186.4" fill="none" stroke="#f0f080" stroke-width="2.6" stroke-linejoin="miter" stroke-linecap="butt"/>
<path d="M500.0 263.1L503.3 266.4M513.3 273.1L516.6 281.4M524.9 289.7L528.3 296.3M536.6 281.4L539.9 276.4M546.5 283.0L549.9 274.7M556.5 271.4L559.8 279.7M568.2 268.1L571.5 268.1M581.4 281.4L586.4 284.7M593.1 273.1L596.4 279.7M604.7 264.7L609.7 271.4M656.2 264.7L661.2 263.1M679.5 268.1L684.5 269.7M692.8 268.1L696.1 264.7M702.8 269.7L707.8 266.4M719.4 276.4L724.4 269.7M766.6 199.9L771.6 193.2M809.8 226.5L814.8 218.2M841.4 233.1L844.7 236.5M848.1 256.4L853.0 254.7M861.4 233.1L868.0 234.8M876.3 224.8L879.6 218.2M912.9 264.7L917.9 271.4M937.8 264.7L944.5 258.1M951.1 266.4L956.1 268.0M977.7 296.3L981.0 296.3M989.3 274.7L990.0 281.3M997.5 264.7L1000.0 273.0M1006.6 274.7L1009.9 269.7M1015.8 239.8L1018.3 246.4M1023.2 254.7L1026.6 258.0M1033.2 263.0L1035.7 269.7M1056.5 291.3L1063.1 288.0M1076.4 296.3L1081.4 291.3M1089.7 283.0L1093.9 281.3M1101.4 286.3L1106.4 284.6M1116.3 286.3L1120.5 278.0M1131.3 288.0L1136.3 281.3M1144.6 281.3L1147.9 273.0M1196.9 224.8L1201.1 231.4M1221.9 221.5L1224.4 216.5M1477.7 134.9L1480.0 138.2M1523.2 128.2L1524.9 134.9M1529.9 149.8L1534.9 146.5M1583.1 158.1L1588.0 161.4M1599.7 156.5L1603.0 148.2M1613.0 143.2L1618.0 151.5M1627.9 159.8L1632.9 159.8M1641.2 139.8L1644.6 143.2M1682.8 139.8L1686.1 148.2" fill="none" stroke="#f0f080" stroke-width="2.3" stroke-linejoin="miter" stroke-linecap="butt"/>
<path d="M1696.1 146.5L1700.0 149.8M1706.6 134.9L1710.0 128.2M1716.6 124.9L1721.6 121.6M1729.9 123.2L1736.6 118.2M1746.5 118.2L1749.9 119.9M1759.8 118.2L1764.8 119.9M1773.1 114.9L1776.5 108.3M1786.4 111.6L1793.1 113.2M1801.4 133.2L1804.7 133.2M1816.4 146.5L1819.7 146.5M1826.3 146.5L1833.0 144.8M1839.6 156.5L1846.3 154.8M1872.9 179.7L1879.5 178.1M1891.2 168.1L1896.1 166.4" fill="none" stroke="#f0f080" stroke-width="2.3" stroke-dasharray="4.5 2" stroke-linejoin="miter" stroke-linecap="butt"/>
<path d="M13.3 264.7L18.3 266.3M18.3 266.3L23.3 263.8M23.3 263.8L28.3 263.0M33.3 264.7L38.3 262.2M38.3 262.2L43.2 265.5M43.2 265.5L48.2 259.7M53.2 253.0L59.9 246.4M59.9 246.4L64.9 243.1M64.9 243.1L70.7 237.2" fill="none" stroke="#f0f080" stroke-width="2.2" stroke-dasharray="3 3.5" stroke-linejoin="miter" stroke-linecap="butt"/>
<path d="M74.0 304.9V310.9M84.8 280.0V286.0M91.4 216.8V222.8M98.9 253.4V259.4M107.2 198.5V204.5M115.6 233.4V239.4M124.7 233.4V239.4M134.7 220.1V226.1M141.3 218.4V224.4M150.5 206.8V212.8M159.6 178.6V184.6M169.6 156.9V162.9M177.9 156.9V162.9M185.4 201.8V207.8M194.5 213.5V219.5M203.7 185.2V191.2M213.6 230.1V236.1M224.4 260.0V266.0M236.1 245.0V251.0M247.7 251.7V257.7M256.6 260.1V266.1M266.6 251.8V257.8M275.8 240.2V246.2M283.2 281.7V287.7M293.2 275.1V281.1M301.5 290.1V296.1M311.5 265.1V271.1M321.5 265.1V271.1M333.1 285.1V291.1M343.1 290.1V296.1M352.2 333.3V339.3M363.0 343.2V349.2M376.3 328.3V334.3M389.6 325.0V331.0M404.6 326.6V332.6M419.5 334.9V340.9M431.2 306.7V312.7M446.1 330.0V336.0M464.4 343.2V349.2M479.4 321.6V327.6M491.0 265.1V271.1M500.0 260.1V266.1M516.6 278.4V284.4M533.2 286.7V292.7M546.5 280.0V286.0M559.8 276.7V282.7M576.5 273.4V279.4M593.1 270.1V276.1M609.7 268.4V274.4M624.7 260.1V266.1M644.6 270.1V276.1M661.2 260.1V266.1M676.2 270.1V276.1M692.8 265.1V271.1M707.8 263.4V269.4M726.1 281.7V287.7M734.4 235.2V241.2M748.3 215.2V221.2M763.3 183.6V189.6M783.2 196.9V202.9M799.9 213.5V219.5M819.8 208.5V214.5M841.4 230.1V236.1M853.0 251.7V257.7M873.0 236.8V242.8M884.6 220.2V226.2M901.2 255.1V261.1M922.9 265.0V271.0M937.8 261.7V267.7M956.1 265.0V271.0M972.7 296.6V302.6M989.3 271.7V277.7M1000.0 270.0V276.0M1013.3 255.0V261.0M1023.2 251.7V257.7M1035.7 266.7V272.7M1051.5 288.3V294.3M1076.4 293.3V299.3M1093.9 278.3V284.3M1111.3 286.6V292.6M1131.3 285.0V291.0M1147.9 270.0V276.0M1161.2 288.3V294.3M1177.8 260.0V266.0M1189.5 236.8V242.8M1206.1 246.7V252.7M1221.9 218.5V224.5M1235.0 231.6V237.6M1250.0 213.3V219.3M1268.2 221.6V227.6M1289.9 215.0V221.0M1306.5 208.3V214.3M1321.4 205.0V211.0M1343.0 195.0V201.0M1354.7 193.4V199.4M1371.3 135.2V141.2M1379.6 110.2V116.2M1391.2 101.9V107.9M1401.2 176.7V182.7M1411.2 160.1V166.1M1424.5 133.5V139.5M1434.5 125.2V131.2M1449.4 183.4V189.4M1462.7 136.8V142.8M1477.7 131.9V137.9M1490.0 123.5V129.5M1499.9 140.2V146.2M1509.9 136.8V142.8M1524.9 131.9V137.9M1538.2 125.2V131.2M1551.5 123.5V129.5M1564.8 145.2V151.2M1579.7 136.8V142.8M1599.7 153.5V159.5M1618.0 148.5V154.5M1637.9 148.5V154.5M1657.0 125.2V131.2M1672.8 131.9V137.9M1692.8 140.2V146.2" fill="none" stroke="#f0f080" stroke-width="2" stroke-linejoin="miter" stroke-linecap="butt"/></g>
<g clip-path="url(#c2)"><path d="M76.2 600.5L77.2 562.6M77.2 562.6L79.1 513.4M79.1 513.4L81.0 503.9M81.0 503.9L83.8 483.1M85.7 502.1L86.6 469.9M98.9 515.3L100.8 500.2M100.8 500.2L102.7 477.5M105.6 486.9L107.5 469.9M107.5 469.9L110.3 465.2M123.6 498.3L126.4 488.8M138.7 539.9L142.5 526.7M142.5 526.7L146.3 522.9M150.0 530.4L153.8 519.1M174.6 530.4L178.4 519.1M187.9 538.0L191.7 532.3M204.9 543.7L208.7 538.0M208.7 538.0L214.4 536.1M223.9 553.2L227.6 551.3M240.9 566.4L246.6 556.9" fill="none" stroke="#ff1010" stroke-width="2.6" stroke-linejoin="miter" stroke-linecap="butt"/>
<path d="M250.0 563.2L256.6 561.6M263.3 568.2L268.3 558.2M271.6 559.9L274.9 543.3M281.6 578.2L284.9 563.2M284.9 563.2L286.6 551.6M333.1 639.7L338.1 638.0M338.1 638.0L340.6 631.4M354.7 661.3L359.7 654.6M369.7 658.0L374.7 649.7M374.7 649.7L378.8 618.1M389.6 636.4L394.6 626.4M399.6 636.4L404.6 633.0M404.6 633.0L407.9 618.1M407.9 618.1L411.2 614.7M411.2 614.7L416.2 609.8M426.2 604.8L429.5 598.1M457.8 606.4L461.1 599.8M481.1 606.4L486.0 601.4M500.0 608.2L503.3 604.8M511.6 616.5L515.0 611.5M533.2 654.7L536.6 643.1M536.6 643.1L543.2 641.4M549.9 638.1L558.2 634.7M558.2 634.7L563.2 624.8M586.4 639.7L591.4 636.4M613.0 634.7L619.7 626.4M619.7 626.4L626.3 621.4M638.0 629.8L644.6 624.8M656.2 629.8L661.2 624.8M684.5 643.1L689.5 638.1M689.5 638.1L694.5 633.1M706.1 639.7L711.1 633.1M716.1 626.4L719.4 621.4M719.4 621.4L724.4 603.2M724.4 603.2L726.9 586.5M1248.3 649.7L1253.3 639.8M1263.3 653.1L1268.2 643.1M1288.2 674.7L1293.2 668.0M1296.5 676.3L1303.2 674.7M1303.2 674.7L1308.1 671.3M1311.5 683.0L1314.8 673.0M1314.8 673.0L1319.8 671.3M1336.4 691.3L1341.4 683.0M1341.4 683.0L1344.7 679.7M1356.3 693.0L1361.3 686.3M1368.0 691.3L1371.3 686.3M1371.3 686.3L1373.0 673.0M1379.6 676.3L1384.6 671.3M1384.6 671.3L1387.9 659.7M1416.2 691.3L1419.5 676.3M1419.5 676.3L1424.5 669.7M1424.5 669.7L1427.8 649.7M1442.8 686.3L1446.1 681.3M1452.8 709.6L1456.1 689.6M1471.0 702.9L1474.4 699.6M1474.4 699.6L1477.7 689.6" fill="none" stroke="#ff1010" stroke-width="2.3" stroke-linejoin="miter" stroke-linecap="butt"/>
<path d="M1480.0 697.9L1485.0 691.3M1486.6 702.9L1490.0 701.3M1490.0 701.3L1491.6 694.6M1491.6 694.6L1495.0 678.0M1496.6 688.0L1499.9 681.3M1504.9 681.3L1508.3 673.0M1508.3 673.0L1511.6 668.0M1514.9 673.0L1519.9 671.3M1519.9 671.3L1523.2 661.4M1524.9 669.7L1529.9 666.4M1576.4 683.8L1581.4 683.0M1588.0 688.0L1596.4 681.3M1603.0 683.0L1613.0 681.3M1647.9 694.6L1657.9 693.0M1657.9 693.0L1660.4 681.3M1667.8 688.0L1671.2 676.3M1671.2 676.3L1676.1 671.3M1692.8 678.0L1706.1 671.3" fill="none" stroke="#ff1010" stroke-width="2.3" stroke-dasharray="4.5 2" stroke-linejoin="miter" stroke-linecap="butt"/>
<path d="M51.6 437.7L54.5 435.8M753.3 643.1L756.6 631.4M764.9 629.8L768.3 619.8M778.2 628.1L784.9 621.5M836.4 663.0L843.1 659.7M861.4 669.7L868.0 668.0M902.9 673.0L907.9 668.0M972.7 669.7L976.1 666.4M992.5 653.1L994.2 643.1M1073.1 629.8L1078.1 621.5M1142.9 616.5L1146.2 606.5M1186.1 624.8L1191.1 614.8M1206.1 604.9L1209.4 598.2M1226.0 616.5L1229.4 609.8M1729.9 668.0L1739.9 666.4M1784.8 653.1L1791.4 646.4M1806.4 650.6L1809.7 649.7" fill="none" stroke="#ff1010" stroke-width="2.2" stroke-dasharray="3 3.5" stroke-linejoin="miter" stroke-linecap="butt"/>
<path d="M75.3 589.9V595.9M77.2 559.6V565.6M81.0 500.9V506.9M85.7 499.1V505.1M89.5 480.1V486.1M96.1 497.2V503.2M100.8 497.2V503.2M105.6 483.9V489.9M110.3 462.2V468.2M116.0 480.1V486.1M123.6 495.3V501.3M128.3 499.1V505.1M134.9 536.9V542.9M142.5 523.7V529.7M150.0 527.4V533.4M159.5 516.1V522.1M170.9 523.7V529.7M178.4 516.1V522.1M187.9 535.0V541.0M194.5 523.7V529.7M201.1 531.2V537.2M208.7 535.0V541.0M218.2 542.6V548.6M227.6 548.3V554.3M237.1 555.8V561.8M246.6 553.9V559.9M256.6 558.6V564.6M268.3 555.2V561.2M274.9 540.3V546.3M281.6 575.2V581.2M286.6 548.6V554.6M298.2 566.9V572.9M303.2 590.1V596.1M314.8 591.8V597.8M323.1 608.4V614.4M331.4 613.4V619.4M338.1 635.0V641.0M343.1 636.7V642.7M349.7 648.3V654.3M359.7 651.6V657.6M369.7 655.0V661.0M378.8 615.1V621.1M384.6 633.4V639.4M394.6 623.4V629.4M404.6 630.0V636.0M411.2 611.7V617.7M421.2 600.1V606.1M429.5 595.1V601.1M439.5 603.4V609.4M451.1 598.4V604.4M461.1 596.8V602.8M469.4 600.1V606.1M481.1 603.4V609.4M492.7 601.8V607.8M500.0 605.2V611.2M506.6 606.8V612.8M515.0 608.5V614.5M523.3 645.0V651.0M533.2 651.7V657.7M543.2 638.4V644.4M558.2 631.7V637.7M568.2 618.4V624.4M578.1 635.1V641.1M586.4 636.7V642.7M594.7 628.4V634.4M606.4 636.7V642.7M619.7 623.4V629.4M633.0 621.8V627.8M644.6 621.8V627.8M656.2 626.8V632.8M666.2 623.4V629.4M679.5 638.4V644.4M689.5 635.1V641.1M699.5 636.7V642.7M711.1 630.1V636.1M719.4 618.4V624.4M726.9 583.5V589.5M734.4 606.8V612.8M742.7 630.1V636.1M1246.6 636.8V642.8M1253.3 636.8V642.8M1263.3 650.1V656.1M1274.9 640.1V646.1M1284.9 666.7V672.7M1293.2 665.0V671.0M1303.2 671.7V677.7M1311.5 680.0V686.0M1319.8 668.3V674.3M1328.1 685.0V691.0M1336.4 688.3V694.3M1344.7 676.7V682.7M1356.3 690.0V696.0M1368.0 688.3V694.3M1373.0 670.0V676.0M1384.6 668.3V674.3M1392.9 651.7V657.7M1402.9 671.7V677.7M1411.2 685.0V691.0M1419.5 673.3V679.3M1427.8 646.7V652.7M1434.5 663.4V669.4M1442.8 683.3V689.3M1451.1 693.3V699.3M1456.1 686.6V692.6M1467.7 690.0V696.0M1474.4 696.6V702.6" fill="none" stroke="#ff1010" stroke-width="2" stroke-linejoin="miter" stroke-linecap="butt"/>
<path d="M73.4 530.4L75.3 592.9M75.3 592.9L76.2 600.5M83.8 483.1L85.7 502.1M86.6 469.9L89.5 483.1M89.5 483.1L93.3 492.6M93.3 492.6L96.1 500.2M96.1 500.2L98.9 515.3M113.1 469.9L116.0 483.1M116.0 483.1L118.8 496.4M126.4 488.8L128.3 502.1M128.3 502.1L131.1 521.0M131.1 521.0L134.9 539.9M134.9 539.9L138.7 539.9M146.3 522.9L150.0 530.4M153.8 519.1L159.5 519.1M159.5 519.1L165.2 519.1M170.9 526.7L174.6 530.4M178.4 519.1L182.2 528.6M182.2 528.6L187.9 538.0M194.5 526.7L197.4 530.4M197.4 530.4L201.1 534.2M201.1 534.2L204.9 543.7M214.4 536.1L218.2 545.6M218.2 545.6L223.9 553.2M233.3 549.4L237.1 558.8M237.1 558.8L240.9 566.4" fill="none" stroke="#1e88f0" stroke-width="2.6" stroke-linejoin="miter" stroke-linecap="butt"/>
<path d="M246.6 556.9L250.0 563.2M268.3 558.2L271.6 559.9M274.9 543.3L277.4 563.2M277.4 563.2L281.6 578.2M286.6 551.6L293.2 561.6M298.2 569.9L300.7 586.5M300.7 586.5L303.2 593.1M309.8 589.8L314.8 594.8M314.8 594.8L319.8 601.4M319.8 601.4L323.1 611.4M323.1 611.4L328.1 613.1M328.1 613.1L331.4 616.4M331.4 616.4L333.1 639.7M343.1 639.7L346.4 648.0M346.4 648.0L349.7 651.3M349.7 651.3L354.7 661.3M359.7 654.6L364.7 663.0M381.3 623.1L384.6 636.4M384.6 636.4L389.6 636.4M394.6 626.4L399.6 636.4M421.2 603.1L426.2 604.8M434.5 596.5L439.5 606.4M439.5 606.4L446.1 608.1M451.1 601.4L457.8 606.4M466.1 596.5L469.4 603.1M469.4 603.1L474.4 609.8M486.0 601.4L492.7 604.8M499.3 608.1L500.0 608.2M506.6 609.8L511.6 616.5M516.6 619.8L523.3 648.0M523.3 648.0L528.3 651.4M568.2 621.4L573.1 629.8M573.1 629.8L578.1 638.1M583.1 636.4L586.4 639.7M594.7 631.4L599.7 634.7M599.7 634.7L606.4 639.7M633.0 624.8L638.0 629.8M651.3 624.8L656.2 629.8M666.2 626.4L671.2 636.4M671.2 636.4L679.5 641.4M699.5 639.7L706.1 639.7M726.9 586.5L730.2 604.8M730.2 604.8L734.4 609.8M739.4 618.1L742.7 633.1M1241.6 633.1L1246.6 639.8M1246.6 639.8L1248.3 649.7M1253.3 639.8L1259.9 649.7M1259.9 649.7L1263.3 653.1M1268.2 643.1L1274.9 643.1M1274.9 643.1L1278.2 654.7M1278.2 654.7L1284.9 669.7M1284.9 669.7L1288.2 674.7M1308.1 671.3L1311.5 683.0M1319.8 671.3L1324.8 681.3M1324.8 681.3L1328.1 688.0M1328.1 688.0L1331.4 697.9M1349.7 681.3L1356.3 693.0M1392.9 654.7L1397.9 669.7M1397.9 669.7L1402.9 674.7M1406.2 683.0L1411.2 688.0M1411.2 688.0L1416.2 691.3M1427.8 649.7L1431.1 666.4M1431.1 666.4L1434.5 666.4M1434.5 666.4L1437.8 673.0M1437.8 673.0L1442.8 686.3M1446.1 681.3L1451.1 696.3M1451.1 696.3L1452.8 709.6M1456.1 689.6L1461.1 696.3M1467.7 693.0L1471.0 702.9" fill="none" stroke="#1e88f0" stroke-width="2.3" stroke-linejoin="miter" stroke-linecap="butt"/>
<path d="M1477.7 689.6L1480.0 697.9M1485.0 691.3L1486.6 702.9M1495.0 678.0L1496.6 688.0M1529.9 666.4L1533.2 668.0M1537.3 661.4L1539.8 671.3M1539.8 671.3L1544.8 674.7M1549.8 673.0L1558.1 676.3M1558.1 676.3L1558.1 683.0M1563.1 676.3L1566.4 683.0M1566.4 683.0L1571.4 689.6M1581.4 683.0L1588.0 688.0M1596.4 681.3L1603.0 683.0M1619.6 678.0L1624.6 686.3M1624.6 686.3L1629.6 689.6M1636.2 689.6L1641.2 693.0M1641.2 693.0L1647.9 694.6M1660.4 681.3L1664.5 686.3M1679.5 676.3L1687.8 676.3M1687.8 676.3L1692.8 678.0" fill="none" stroke="#1e88f0" stroke-width="2.3" stroke-dasharray="4.5 2" stroke-linejoin="miter" stroke-linecap="butt"/>
<path d="M27.0 431.1L35.5 433.9M66.8 426.4L72.5 427.3M799.9 624.8L806.5 629.8M821.5 639.8L826.4 646.4M883.0 656.4L888.0 668.0M929.5 664.7L936.2 666.4M951.1 669.7L956.1 671.3M1001.6 629.8L1005.0 629.8M1014.9 608.2L1019.9 611.5M1030.7 626.5L1034.9 633.1M1048.2 621.5L1053.2 621.5M1096.4 624.8L1104.7 626.5M1123.0 633.1L1128.0 634.8M1161.2 606.5L1167.9 608.2M1761.5 659.7L1764.8 659.7M1828.0 654.7L1841.3 655.6M1857.9 663.0L1862.9 666.4M1872.9 671.3L1877.9 673.0M1886.2 666.4L1896.1 669.7" fill="none" stroke="#1e88f0" stroke-width="2.2" stroke-dasharray="3 3.5" stroke-linejoin="miter" stroke-linecap="butt"/>
<path d="M76.2 597.5V603.5M83.8 480.1V486.1M93.3 489.6V495.6M102.7 474.5V480.5M113.1 466.9V472.9M126.4 485.8V491.8M138.7 536.9V542.9M153.8 516.1V522.1M174.6 527.4V533.4M191.7 529.3V535.3M204.9 540.7V546.7M223.9 550.2V556.2M240.9 563.4V569.4M263.3 565.2V571.2M277.4 560.2V566.2M293.2 558.6V564.6M309.8 586.8V592.8M328.1 610.1V616.1M340.6 628.4V634.4M354.7 658.3V664.3M374.7 646.7V652.7M389.6 633.4V639.4M407.9 615.1V621.1M426.2 601.8V607.8M446.1 605.1V611.1M466.1 593.5V599.5M486.0 598.4V604.4M503.3 601.8V607.8M516.6 616.8V622.8M536.6 640.1V646.1M563.2 621.8V627.8M583.1 633.4V639.4M599.7 631.7V637.7M626.3 618.4V624.4M651.3 621.8V627.8M671.2 633.4V639.4M694.5 630.1V636.1M716.1 623.4V629.4M730.2 601.8V607.8M1241.6 630.1V636.1M1259.9 646.7V652.7M1278.2 651.7V657.7M1296.5 673.3V679.3M1314.8 670.0V676.0M1331.4 694.9V700.9M1349.7 678.3V684.3M1371.3 683.3V689.3M1387.9 656.7V662.7M1406.2 680.0V686.0M1424.5 666.7V672.7M1437.8 670.0V676.0M1452.8 706.6V712.6M1471.0 699.9V705.9" fill="none" stroke="#1e88f0" stroke-width="2" stroke-linejoin="miter" stroke-linecap="butt"/>
<path d="M102.7 477.5L105.6 486.9M110.3 465.2L113.1 469.9M118.8 496.4L123.6 498.3M165.2 519.1L170.9 526.7M191.7 532.3L194.5 526.7M227.6 551.3L233.3 549.4" fill="none" stroke="#f0f080" stroke-width="2.6" stroke-linejoin="miter" stroke-linecap="butt"/>
<path d="M256.6 561.6L263.3 568.2M293.2 561.6L298.2 569.9M303.2 593.1L309.8 589.8M340.6 631.4L343.1 639.7M364.7 663.0L369.7 658.0M378.8 618.1L381.3 623.1M416.2 609.8L421.2 603.1M429.5 598.1L434.5 596.5M446.1 608.1L451.1 601.4M461.1 599.8L466.1 596.5M474.4 609.8L481.1 606.4M492.7 604.8L499.3 608.1M503.3 604.8L506.6 609.8M515.0 611.5L516.6 619.8M528.3 651.4L533.2 654.7M543.2 641.4L549.9 638.1M563.2 624.8L568.2 621.4M578.1 638.1L583.1 636.4M591.4 636.4L594.7 631.4M606.4 639.7L613.0 634.7M626.3 621.4L633.0 624.8M644.6 624.8L651.3 624.8M661.2 624.8L666.2 626.4M679.5 641.4L684.5 643.1M694.5 633.1L699.5 639.7M711.1 633.1L716.1 626.4M734.4 609.8L739.4 618.1M1235.0 631.4L1241.6 633.1M1293.2 668.0L1296.5 676.3M1331.4 697.9L1336.4 691.3M1344.7 679.7L1349.7 681.3M1361.3 686.3L1368.0 691.3M1373.0 673.0L1379.6 676.3M1387.9 659.7L1392.9 654.7M1402.9 674.7L1406.2 683.0M1461.1 696.3L1467.7 693.0" fill="none" stroke="#f0f080" stroke-width="2.3" stroke-linejoin="miter" stroke-linecap="butt"/>
<path d="M1499.9 681.3L1504.9 681.3M1511.6 668.0L1514.9 673.0M1523.2 661.4L1524.9 669.7M1533.2 668.0L1537.3 661.4M1544.8 674.7L1549.8 673.0M1558.1 683.0L1563.1 676.3M1571.4 689.6L1576.4 683.8M1613.0 681.3L1619.6 678.0M1629.6 689.6L1636.2 689.6M1664.5 686.3L1667.8 688.0M1676.1 671.3L1679.5 676.3" fill="none" stroke="#f0f080" stroke-width="2.3" stroke-dasharray="4.5 2" stroke-linejoin="miter" stroke-linecap="butt"/>
<path d="M15.7 443.4L17.6 437.7M17.6 437.7L22.3 434.9M22.3 434.9L27.0 431.1M35.5 433.9L36.5 433.0M36.5 433.0L46.0 432.0M46.0 432.0L51.6 437.7M54.5 435.8L59.2 433.0M59.2 433.0L64.9 422.6M64.9 422.6L66.8 426.4M745.0 646.4L750.0 656.4M750.0 656.4L753.3 643.1M756.6 631.4L760.0 639.8M760.0 639.8L763.3 651.4M763.3 651.4L764.9 629.8M768.3 619.8L771.6 636.4M771.6 636.4L774.9 639.8M774.9 639.8L778.2 628.1M784.9 621.5L789.9 631.4M789.9 631.4L794.9 636.4M794.9 636.4L799.9 624.8M806.5 629.8L811.5 621.5M811.5 621.5L818.1 629.8M818.1 629.8L821.5 639.8M826.4 646.4L829.8 651.4M829.8 651.4L833.1 669.7M833.1 669.7L836.4 663.0M843.1 659.7L848.1 673.0M848.1 673.0L854.7 668.0M854.7 668.0L861.4 669.7M868.0 668.0L874.7 663.0M874.7 663.0L879.6 646.4M879.6 646.4L883.0 656.4M888.0 668.0L894.6 674.7M894.6 674.7L900.4 681.3M900.4 681.3L902.9 673.0M907.9 668.0L916.2 673.0M916.2 673.0L924.5 668.0M924.5 668.0L929.5 664.7M936.2 666.4L941.1 664.7M941.1 664.7L946.1 661.4M946.1 661.4L951.1 669.7M956.1 671.3L961.1 664.7M961.1 664.7L966.1 668.0M966.1 668.0L972.7 669.7M976.1 666.4L982.7 668.0M982.7 668.0L989.3 659.7M990.0 659.7L992.5 653.1M994.2 643.1L995.8 631.4M995.8 631.4L999.1 624.8M999.1 624.8L1001.6 629.8M1005.0 629.8L1008.3 621.5M1008.3 621.5L1009.9 613.2M1009.9 613.2L1014.9 608.2M1019.9 611.5L1024.9 608.2M1024.9 608.2L1029.1 613.2M1029.1 613.2L1030.7 626.5M1034.9 633.1L1039.9 618.2M1039.9 618.2L1044.9 626.5M1044.9 626.5L1048.2 621.5M1053.2 621.5L1061.5 618.2M1061.5 618.2L1064.8 629.8M1064.8 629.8L1073.1 629.8M1078.1 621.5L1083.1 626.5M1083.1 626.5L1089.7 621.5M1089.7 621.5L1096.4 624.8M1104.7 626.5L1109.7 633.1M1109.7 633.1L1116.3 623.1M1116.3 623.1L1123.0 633.1M1128.0 634.8L1133.0 641.4M1133.0 641.4L1137.9 624.8M1137.9 624.8L1142.9 616.5M1146.2 606.5L1150.4 598.2M1150.4 598.2L1152.9 613.2M1152.9 613.2L1161.2 606.5M1167.9 608.2L1172.8 616.5M1172.8 616.5L1179.5 621.5M1179.5 621.5L1186.1 624.8M1191.1 614.8L1196.1 608.2M1196.1 608.2L1201.1 606.5M1201.1 606.5L1206.1 604.9M1209.4 598.2L1214.4 603.2M1214.4 603.2L1221.1 611.5M1221.1 611.5L1226.0 616.5M1229.4 609.8L1232.7 626.5M1706.6 671.3L1723.3 666.4M1723.3 666.4L1726.6 664.7M1726.6 664.7L1729.9 668.0M1739.9 666.4L1753.2 668.0M1753.2 668.0L1759.8 666.4M1759.8 666.4L1761.5 659.7M1764.8 659.7L1774.8 658.0M1774.8 658.0L1781.4 654.7M1781.4 654.7L1784.8 653.1M1791.4 646.4L1793.1 649.7M1793.1 649.7L1799.7 649.7M1799.7 649.7L1806.4 650.6M1809.7 649.7L1813.0 653.9M1813.0 653.9L1823.0 651.4M1823.0 651.4L1828.0 654.7M1841.3 655.6L1849.6 657.2M1849.6 657.2L1854.6 660.5M1854.6 660.5L1857.9 663.0M1862.9 666.4L1866.2 671.3M1866.2 671.3L1867.9 675.5M1867.9 675.5L1872.9 671.3M1877.9 673.0L1882.8 666.4M1882.8 666.4L1884.5 663.9M1884.5 663.9L1886.2 666.4" fill="none" stroke="#f0f080" stroke-width="2.2" stroke-dasharray="3 3.5" stroke-linejoin="miter" stroke-linecap="butt"/>
<path d="M79.1 510.4V516.4M86.6 466.9V472.9M98.9 512.3V518.3M107.5 466.9V472.9M118.8 493.4V499.4M131.1 518.0V524.0M146.3 519.9V525.9M165.2 516.1V522.1M182.2 525.6V531.6M197.4 527.4V533.4M214.4 533.1V539.1M233.3 546.4V552.4M250.0 560.2V566.2M271.6 556.9V562.9M284.9 560.2V566.2M300.7 583.5V589.5M319.8 598.4V604.4M333.1 636.7V642.7M346.4 645.0V651.0M364.7 660.0V666.0M381.3 620.1V626.1M399.6 633.4V639.4M416.2 606.8V612.8M434.5 593.5V599.5M457.8 603.4V609.4M474.4 606.8V612.8M499.3 605.1V611.1M511.6 613.5V619.5M528.3 648.4V654.4M549.9 635.1V641.1M573.1 626.8V632.8M591.4 633.4V639.4M613.0 631.7V637.7M638.0 626.8V632.8M661.2 621.8V627.8M684.5 640.1V646.1M706.1 636.7V642.7M724.4 600.2V606.2M739.4 615.1V621.1M1248.3 646.7V652.7M1268.2 640.1V646.1M1288.2 671.7V677.7M1308.1 668.3V674.3M1324.8 678.3V684.3M1341.4 680.0V686.0M1361.3 683.3V689.3M1379.6 673.3V679.3M1397.9 666.7V672.7M1416.2 688.3V694.3M1431.1 663.4V669.4M1446.1 678.3V684.3M1461.1 693.3V699.3M1477.7 686.6V692.6" fill="none" stroke="#f0f080" stroke-width="2" stroke-linejoin="miter" stroke-linecap="butt"/></g>
<g clip-path="url(#c3)"><path d="M13.3 1023.8L16.6 1022.1L20.0 1026.2L26.6 1022.9L33.3 1027.9L38.3 1022.1L43.2 1026.2L48.2 1026.2L53.2 1014.6L58.2 1011.3L63.2 1009.6L68.2 1012.1L71.5 1009.6L74.0 1034.6L74.8 948.1L76.5 973.1L78.2 986.4L81.5 1006.3L84.8 998.0L88.1 986.4L91.4 978.0L94.8 969.7L96.4 953.1L98.9 973.1L101.4 959.8L104.7 968.1L113.1 966.4L116.4 976.4L119.7 964.7L124.7 961.4L128.0 953.1L133.0 951.4L136.3 946.5L139.7 950.6L146.3 946.5L149.6 941.5L153.0 933.2L156.3 923.2L159.6 916.5L164.6 903.2L171.2 900.8L177.9 900.8L179.5 918.2L184.5 928.2L191.2 921.5L194.5 931.5L197.8 924.9L202.8 918.2L205.3 936.5L207.8 943.1L211.1 959.8L216.1 943.1L222.8 949.8L226.1 959.8L231.1 953.1L237.7 959.8L241.1 951.4L246.0 946.5L250.0 949.8L252.5 944.8L256.6 959.7L261.6 954.7L266.6 953.1L271.6 961.4L274.9 951.4L279.9 956.4L283.2 974.7L286.6 973.0L291.6 963.1L294.9 971.4L298.2 983.0L303.2 966.4L308.2 963.1L313.2 948.1L316.5 953.1L321.5 943.1L326.5 939.8L331.4 941.4L334.8 939.8L339.8 944.8L341.4 959.7L342.3 938.1L346.4 946.4L349.7 959.7L356.4 973.0L361.4 964.7L364.7 968.0L368.0 959.7L372.2 958.1L378.0 963.1L380.5 974.7L383.0 968.0L389.6 973.0L394.6 971.4L399.6 974.7L402.9 969.7L407.9 979.7L412.9 989.7L422.9 996.3L429.5 988.0L432.8 976.4L437.8 978.0L442.8 989.7L449.5 986.3L456.1 986.3L461.1 998.0L466.1 1004.6L471.1 998.0L477.7 994.6L481.1 979.7L487.7 968.0L492.7 941.4L496.0 938.1L499.3 941.4L500.0 944.7L501.7 936.4L506.6 939.7L516.6 939.7L520.8 929.8L524.9 931.4L528.3 938.1L534.9 929.8L543.2 924.8L547.4 934.7L549.9 926.4L554.9 924.8L559.8 934.7L564.8 928.1L571.5 933.1L576.5 931.4L581.4 934.7L589.8 934.7L591.4 926.4L593.1 933.1L599.7 933.1L604.7 919.8L609.7 924.8L614.7 918.1L618.8 913.1L623.0 924.8L631.3 929.8L636.3 939.7L641.3 933.1L644.6 938.1L649.6 924.8L656.2 926.4L661.2 928.1L666.2 924.8L669.5 933.1L677.9 933.1L679.5 923.1L687.8 924.8L691.2 929.8L696.1 920.6L701.1 929.8L704.5 921.4L711.1 924.8L716.1 931.4L722.7 939.7L726.1 943.1L727.7 969.7L728.6 916.5L732.7 913.1L734.4 921.4L737.7 908.2L742.7 894.9L745.0 888.2L748.3 878.2L751.6 861.6L755.8 873.2L758.3 866.6L762.5 861.6L768.3 873.2L773.3 866.6L777.4 866.6L779.9 873.2L784.9 873.2L789.0 869.1L794.9 876.6L801.5 889.9L811.5 897.3L818.1 889.9L821.5 881.6L826.4 874.9L831.4 881.6L834.8 875.7L841.4 879.9L844.7 881.6L848.1 894.9L856.4 894.9L859.7 878.2L869.7 881.6L873.8 886.5L878.0 876.6L884.6 880.7L891.3 876.6L896.3 884.9L901.2 894.9L907.9 896.5L911.2 903.2L917.9 906.5L923.7 911.5L927.8 908.2L931.2 901.5L936.2 903.2L939.5 908.2L946.1 898.2L951.1 904.8L956.1 908.2L962.8 908.2L967.7 914.8L971.1 928.1L974.4 929.8L981.0 933.1L987.7 918.1L990.0 919.7L995.0 921.4L996.6 931.4L1000.0 933.0L1008.3 933.0L1011.6 934.7L1015.8 928.0L1017.4 918.1L1021.6 926.4L1029.9 926.4L1031.6 911.4L1034.0 923.1L1036.5 929.7L1039.9 919.7L1043.2 934.7L1048.2 941.3L1053.2 949.7L1061.5 953.0L1064.8 948.0L1069.8 948.0L1078.1 951.3L1083.1 946.3L1088.1 946.3L1092.2 939.7L1098.0 949.7L1103.0 941.3L1111.3 943.0L1116.3 939.7L1123.0 939.7L1128.0 938.0L1134.6 931.4L1139.6 941.3L1142.9 948.0L1148.7 943.0L1152.1 956.3L1156.2 954.6L1162.9 956.3L1166.2 948.0L1169.5 943.0L1172.8 931.4L1177.8 933.0L1179.5 919.7L1184.5 921.4L1189.5 911.4L1194.5 908.1L1199.4 904.8L1204.4 913.1L1206.1 924.7L1211.1 914.7L1219.4 914.7L1222.7 901.4L1227.7 896.5L1232.7 898.1L1235.0 898.0L1240.0 893.0L1243.3 881.3L1247.5 875.5L1253.3 883.0L1256.6 878.0L1263.3 879.7L1265.8 874.7L1269.9 886.3L1274.9 876.4L1283.2 869.7L1289.9 866.4L1295.7 862.2L1301.5 868.0L1306.5 859.7L1309.8 854.7L1312.3 846.4L1316.4 859.7L1321.4 859.7L1324.8 853.1L1329.7 859.7L1334.7 854.7L1341.4 859.7L1344.7 854.7L1349.7 858.1L1349.7 846.4L1356.3 839.8L1364.7 834.8L1368.0 814.9L1371.3 791.6L1374.6 786.6L1378.0 806.5L1379.6 783.3L1384.6 779.9L1387.1 775.0L1391.2 788.3L1394.6 791.6L1397.9 803.2L1401.2 838.1L1404.5 844.8L1407.9 823.2L1412.9 823.2L1417.8 846.4L1422.8 829.8L1425.3 809.9L1428.7 846.4L1432.8 796.6L1437.8 809.9L1442.8 821.5L1446.1 826.5L1451.1 816.5L1454.4 801.6L1461.1 799.9L1467.7 794.9L1472.7 788.3L1477.7 789.9L1480.0 791.6L1483.3 784.9L1486.6 798.2L1490.0 791.6L1494.1 773.3L1496.6 783.3L1499.9 803.2L1506.6 806.5L1513.2 803.2L1514.9 811.5L1516.6 798.2L1520.7 794.9L1524.9 801.6L1527.4 799.9L1529.9 814.9L1534.9 813.2L1539.8 804.9L1544.8 808.2L1549.8 793.2L1553.1 798.2L1558.1 813.2L1561.4 806.5L1566.4 813.2L1571.4 818.2L1576.4 803.2L1581.4 798.2L1583.1 813.2L1589.7 814.9L1596.4 804.9L1601.3 814.9L1603.0 803.2L1609.7 816.5L1613.0 803.2L1619.6 809.9L1626.3 806.5L1629.6 813.2L1636.2 809.9L1641.2 794.9L1649.5 798.2L1652.9 786.6L1658.7 786.6L1661.2 804.9L1666.2 808.2L1668.7 816.5L1676.1 801.6L1679.5 806.5L1684.5 811.5L1689.4 804.9L1696.1 806.5L1700.0 804.9L1703.3 811.5L1710.0 798.2L1715.0 801.6L1718.3 794.9L1726.6 793.2L1728.3 798.2L1738.2 789.9L1743.2 789.9L1748.2 793.2L1751.5 791.6L1763.2 795.7L1768.2 791.6L1771.5 794.1L1776.5 789.1L1781.4 788.3L1784.8 793.2L1794.7 796.6L1799.7 804.9L1801.4 814.9L1808.0 811.5L1816.4 819.8L1823.0 814.9L1829.7 818.2L1834.6 821.5L1839.6 826.5L1846.3 826.5L1850.4 821.5L1856.2 829.8L1862.9 836.5L1869.5 829.8L1872.9 833.1L1881.2 833.1L1886.2 828.2L1889.5 838.1L1894.5 831.5L1899.5 828.2L1901.1 829.8" fill="none" stroke="#ff0000" stroke-width="2.9" stroke-linejoin="miter" stroke-miterlimit="3"/></g>
</svg>
<div class="mono" style="left:48px;top:370.5px;color:#f0f0f0;font-weight:bold;font-size:21.5px;transform:scaleX(0.7496)">06</div>
<div class="mono" style="left:99.1px;top:370.5px;color:#d8d8d8;font-size:21.5px;transform:scaleX(0.7496)">09</div>
<div class="mono" style="left:192.5px;top:370.5px;color:#d8d8d8;font-size:21.5px;transform:scaleX(0.7496)">10</div>
<div class="mono" style="left:287.9px;top:370.5px;color:#d8d8d8;font-size:21.5px;transform:scaleX(0.7496)">11</div>
<div class="mono" style="left:381.7px;top:370.5px;color:#d8d8d8;font-size:21.5px;transform:scaleX(0.7496)">12</div>
<div class="mono" style="left:477.0px;top:370.5px;color:#d8d8d8;font-size:21.5px;transform:scaleX(0.7496)">13</div>
<div class="mono" style="left:572.1px;top:370.5px;color:#d8d8d8;font-size:21.5px;transform:scaleX(0.7496)">14</div>
<div class="mono" style="left:665.1px;top:370.5px;color:#d8d8d8;font-size:21.5px;transform:scaleX(0.7496)">15</div>
<div class="mono" style="left:729.0px;top:370.5px;color:#d8d8d8;font-size:21.5px;transform:scaleX(0.7496)">17</div>
<div class="mono" style="left:820.5px;top:370.5px;color:#d8d8d8;font-size:21.5px;transform:scaleX(0.7496)">18</div>
<div class="mono" style="left:916.5px;top:370.5px;color:#d8d8d8;font-size:21.5px;transform:scaleX(0.7496)">19</div>
<div class="mono" style="left:1009.5px;top:370.5px;color:#d8d8d8;font-size:21.5px;transform:scaleX(0.7496)">20</div>
<div class="mono" style="left:1105.5px;top:370.5px;color:#d8d8d8;font-size:21.5px;transform:scaleX(0.7496)">21</div>
<div class="mono" style="left:1198.0px;top:370.5px;color:#d8d8d8;font-size:21.5px;transform:scaleX(0.7496)">22</div>
<div class="mono" style="left:1293.1px;top:370.5px;color:#d8d8d8;font-size:21.5px;transform:scaleX(0.7496)">23</div>
<div class="mono" style="left:1388.2px;top:370.5px;color:#d8d8d8;font-size:21.5px;transform:scaleX(0.7496)">00</div>
<div class="mono" style="left:1481.5px;top:370.5px;color:#d8d8d8;font-size:21.5px;transform:scaleX(0.7496)">01</div>
<div class="mono" style="left:1574.5px;top:370.5px;color:#d8d8d8;font-size:21.5px;transform:scaleX(0.7496)">02</div>
<div class="mono" style="left:1666.5px;top:370.5px;color:#d8d8d8;font-size:21.5px;transform:scaleX(0.7496)">03</div>
<div class="mono" style="left:1752.5px;top:370.5px;color:#d8d8d8;font-size:21.5px;transform:scaleX(0.7496)">04</div>
<div class="mono" style="left:1829.2px;top:370.5px;color:#d8d8d8;font-size:21.5px;transform:scaleX(0.7496)">05</div>
<div class="mono" style="left:1874px;top:370.5px;color:#d8d8d8;font-size:21.5px;transform:scaleX(0.7496)">06</div>
<div class="mono" style="left:75px;top:346px;color:#d8d8d8;font-size:21.5px;transform:scaleX(0.7907)">03</div>
<div class="mono" style="left:1389px;top:346px;color:#d8d8d8;font-size:21.5px;transform:scaleX(0.7752)">04</div>
<div class="mono" style="left:1908.5px;top:72.9px;color:#d8d8d8;font-size:21.5px;transform:scaleX(0.7496)">14,100</div>
<div class="mono" style="left:1908.5px;top:238.10000000000002px;color:#d8d8d8;font-size:21.5px;transform:scaleX(0.7496)">14,000</div>
<div class="mono" style="left:1908.5px;top:320.5px;color:#d8d8d8;font-size:21.5px;transform:scaleX(0.7496)">13,950</div>
<div class="a" style="left:1907px;top:161px;width:93px;height:33.5px;background:#d4d4d4"></div>
<div class="mono" style="left:1925.0px;top:166.75px;color:#000;font-weight:bold;font-size:21.5px;transform:scaleX(0.7364)">14,050</div>
<div class="mono" style="left:12px;top:80px;color:#d8d8d8;font-size:21.5px;transform:scaleX(0.7496)"><span class="w2">時</span><span class="w2">刻</span>:06:00&nbsp;<span class="w2">始</span><span class="w2">値</span>:14,050&nbsp;<span class="w2">高</span><span class="w2">値</span>:14,050&nbsp;<span class="w2">安</span><span class="w2">値</span>:14,050&nbsp;<span class="w2">終</span><span class="w2">値</span>:14,050</div>
<div class="mono" style="left:48px;top:727.5px;color:#f0f0f0;font-weight:bold;font-size:21.5px;transform:scaleX(0.7496)">06</div>
<div class="mono" style="left:99.1px;top:727.5px;color:#d8d8d8;font-size:21.5px;transform:scaleX(0.7496)">09</div>
<div class="mono" style="left:192.5px;top:727.5px;color:#d8d8d8;font-size:21.5px;transform:scaleX(0.7496)">10</div>
<div class="mono" style="left:287.9px;top:727.5px;color:#d8d8d8;font-size:21.5px;transform:scaleX(0.7496)">11</div>
<div class="mono" style="left:381.7px;top:727.5px;color:#d8d8d8;font-size:21.5px;transform:scaleX(0.7496)">12</div>
<div class="mono" style="left:477.0px;top:727.5px;color:#d8d8d8;font-size:21.5px;transform:scaleX(0.7496)">13</div>
<div class="mono" style="left:572.1px;top:727.5px;color:#d8d8d8;font-size:21.5px;transform:scaleX(0.7496)">14</div>
<div class="mono" style="left:665.1px;top:727.5px;color:#d8d8d8;font-size:21.5px;transform:scaleX(0.7496)">15</div>
<div class="mono" style="left:729.0px;top:727.5px;color:#d8d8d8;font-size:21.5px;transform:scaleX(0.7496)">17</div>
<div class="mono" style="left:820.5px;top:727.5px;color:#d8d8d8;font-size:21.5px;transform:scaleX(0.7496)">18</div>
<div class="mono" style="left:916.5px;top:727.5px;color:#d8d8d8;font-size:21.5px;transform:scaleX(0.7496)">19</div>
<div class="mono" style="left:1009.5px;top:727.5px;color:#d8d8d8;font-size:21.5px;transform:scaleX(0.7496)">20</div>
<div class="mono" style="left:1105.5px;top:727.5px;color:#d8d8d8;font-size:21.5px;transform:scaleX(0.7496)">21</div>
<div class="mono" style="left:1198.0px;top:727.5px;color:#d8d8d8;font-size:21.5px;transform:scaleX(0.7496)">22</div>
<div class="mono" style="left:1293.1px;top:727.5px;color:#d8d8d8;font-size:21.5px;transform:scaleX(0.7496)">23</div>
<div class="mono" style="left:1388.2px;top:727.5px;color:#d8d8d8;font-size:21.5px;transform:scaleX(0.7496)">00</div>
<div class="mono" style="left:1481.5px;top:727.5px;color:#d8d8d8;font-size:21.5px;transform:scaleX(0.7496)">01</div>
<div class="mono" style="left:1574.5px;top:727.5px;color:#d8d8d8;font-size:21.5px;transform:scaleX(0.7496)">02</div>
<div class="mono" style="left:1666.5px;top:727.5px;color:#d8d8d8;font-size:21.5px;transform:scaleX(0.7496)">03</div>
<div class="mono" style="left:1752.5px;top:727.5px;color:#d8d8d8;font-size:21.5px;transform:scaleX(0.7496)">04</div>
<div class="mono" style="left:1829.2px;top:727.5px;color:#d8d8d8;font-size:21.5px;transform:scaleX(0.7496)">05</div>
<div class="mono" style="left:1874px;top:727.5px;color:#d8d8d8;font-size:21.5px;transform:scaleX(0.7496)">06</div>
<div class="mono" style="left:75px;top:702px;color:#d8d8d8;font-size:21.5px;transform:scaleX(0.7907)">03</div>
<div class="mono" style="left:1389px;top:702px;color:#d8d8d8;font-size:21.5px;transform:scaleX(0.7752)">04</div>
<div class="mono" style="left:1908.5px;top:447.7px;color:#d8d8d8;font-size:21.5px;transform:scaleX(0.7496)">4,800</div>
<div class="mono" style="left:1908.5px;top:509.9px;color:#d8d8d8;font-size:21.5px;transform:scaleX(0.7496)">4,775</div>
<div class="mono" style="left:1908.5px;top:571.5px;color:#d8d8d8;font-size:21.5px;transform:scaleX(0.7496)">4,750</div>
<div class="mono" style="left:1908.5px;top:632.3px;color:#d8d8d8;font-size:21.5px;transform:scaleX(0.7496)">4,725</div>
<div class="mono" style="left:1908.5px;top:693.8px;color:#d8d8d8;font-size:21.5px;transform:scaleX(0.7496)">4,700</div>
<div class="a" style="left:1907px;top:659.5px;width:93px;height:33.0px;background:#d4d4d4"></div>
<div class="mono" style="left:1929.75px;top:665.0px;color:#000;font-weight:bold;font-size:21.5px;transform:scaleX(0.7364)">4,716</div>
<div class="mono" style="left:12px;top:408px;color:#d8d8d8;font-size:21.5px;transform:scaleX(0.7496)"><span class="w2">時</span><span class="w2">刻</span>:06:00&nbsp;<span class="w2">始</span><span class="w2">値</span>:---&nbsp;<span class="w2">高</span><span class="w2">値</span>:---&nbsp;<span class="w2">安</span><span class="w2">値</span>:---&nbsp;<span class="w2">終</span><span class="w2">値</span>:---</div>
<div class="mono" style="left:48px;top:1048.5px;color:#f0f0f0;font-weight:bold;font-size:21.5px;transform:scaleX(0.7496)">06</div>
<div class="mono" style="left:99.1px;top:1048.5px;color:#d8d8d8;font-size:21.5px;transform:scaleX(0.7496)">09</div>
<div class="mono" style="left:192.5px;top:1048.5px;color:#d8d8d8;font-size:21.5px;transform:scaleX(0.7496)">10</div>
<div class="mono" style="left:287.9px;top:1048.5px;color:#d8d8d8;font-size:21.5px;transform:scaleX(0.7496)">11</div>
<div class="mono" style="left:381.7px;top:1048.5px;color:#d8d8d8;font-size:21.5px;transform:scaleX(0.7496)">12</div>
<div class="mono" style="left:477.0px;top:1048.5px;color:#d8d8d8;font-size:21.5px;transform:scaleX(0.7496)">13</div>
<div class="mono" style="left:572.1px;top:1048.5px;color:#d8d8d8;font-size:21.5px;transform:scaleX(0.7496)">14</div>
<div class="mono" style="left:665.1px;top:1048.5px;color:#d8d8d8;font-size:21.5px;transform:scaleX(0.7496)">15</div>
<div class="mono" style="left:729.0px;top:1048.5px;color:#d8d8d8;font-size:21.5px;transform:scaleX(0.7496)">17</div>
<div class="mono" style="left:820.5px;top:1048.5px;color:#d8d8d8;font-size:21.5px;transform:scaleX(0.7496)">18</div>
<div class="mono" style="left:916.5px;top:1048.5px;color:#d8d8d8;font-size:21.5px;transform:scaleX(0.7496)">19</div>
<div class="mono" style="left:1009.5px;top:1048.5px;color:#d8d8d8;font-size:21.5px;transform:scaleX(0.7496)">20</div>
<div class="mono" style="left:1105.5px;top:1048.5px;color:#d8d8d8;font-size:21.5px;transform:scaleX(0.7496)">21</div>
<div class="mono" style="left:1198.0px;top:1048.5px;color:#d8d8d8;font-size:21.5px;transform:scaleX(0.7496)">22</div>
<div class="mono" style="left:1293.1px;top:1048.5px;color:#d8d8d8;font-size:21.5px;transform:scaleX(0.7496)">23</div>
<div class="mono" style="left:1388.2px;top:1048.5px;color:#d8d8d8;font-size:21.5px;transform:scaleX(0.7496)">00</div>
<div class="mono" style="left:1481.5px;top:1048.5px;color:#d8d8d8;font-size:21.5px;transform:scaleX(0.7496)">01</div>
<div class="mono" style="left:1574.5px;top:1048.5px;color:#d8d8d8;font-size:21.5px;transform:scaleX(0.7496)">02</div>
<div class="mono" style="left:1666.5px;top:1048.5px;color:#d8d8d8;font-size:21.5px;transform:scaleX(0.7496)">03</div>
<div class="mono" style="left:1752.5px;top:1048.5px;color:#d8d8d8;font-size:21.5px;transform:scaleX(0.7496)">04</div>
<div class="mono" style="left:1829.2px;top:1048.5px;color:#d8d8d8;font-size:21.5px;transform:scaleX(0.7496)">05</div>
<div class="mono" style="left:1874px;top:1048.5px;color:#d8d8d8;font-size:21.5px;transform:scaleX(0.7496)">06</div>
<div class="mono" style="left:75px;top:1024px;color:#d8d8d8;font-size:21.5px;transform:scaleX(0.7907)">03</div>
<div class="mono" style="left:1389px;top:1024px;color:#d8d8d8;font-size:21.5px;transform:scaleX(0.7752)">04</div>
<div class="mono" style="left:1908.5px;top:793.5px;color:#d8d8d8;font-size:21.5px;transform:scaleX(0.7496)">9,350</div>
<div class="mono" style="left:1908.5px;top:857.0px;color:#d8d8d8;font-size:21.5px;transform:scaleX(0.7496)">9,300</div>
<div class="mono" style="left:1908.5px;top:920.5px;color:#d8d8d8;font-size:21.5px;transform:scaleX(0.7496)">9,250</div>
<div class="mono" style="left:1908.5px;top:984.5px;color:#d8d8d8;font-size:21.5px;transform:scaleX(0.7496)">9,200</div>
<div class="mono" style="left:1908.5px;top:1050.2px;color:#d8d8d8;font-size:21.5px;transform:scaleX(0.7496)">9,150</div>
<div class="a" style="left:1907px;top:817px;width:93px;height:33px;background:#d4d4d4"></div>
<div class="mono" style="left:1929.75px;top:822.5px;color:#000;font-weight:bold;font-size:21.5px;transform:scaleX(0.7364)">9,334</div>
<div class="mono" style="left:12px;top:764px;color:#d8d8d8;font-size:21.5px;transform:scaleX(0.7496)">[<span class="w2">金</span>&nbsp;25/12&nbsp;14,050<span class="w2">×</span>1.00]<span class="w2">－</span>[<span class="w2">白</span><span class="w2">金</span>&nbsp;25/12&nbsp;4,716<span class="w2">×</span>1.00]&nbsp;<span class="w2">終</span><span class="w2">値</span>&nbsp;<span class="w2">時</span><span class="w2">刻</span>:06:00&nbsp;9,334</div>
<svg class="a" style="left:15px;top:11px" width="23" height="23" viewBox="0 0 23 23">
<rect x="0.5" y="1" width="22" height="21" fill="#f4f4f4"/>
<g stroke="#d8d8d8" stroke-width="0.8"><line x1="2" y1="4" x2="22" y2="4"/><line x1="2" y1="7" x2="22" y2="7"/><line x1="2" y1="10" x2="22" y2="10"/><line x1="2" y1="13" x2="22" y2="13"/><line x1="2" y1="16" x2="22" y2="16"/><line x1="2" y1="19" x2="22" y2="19"/></g>
<path d="M1.2 1.5V21.8H22" fill="none" stroke="#707070" stroke-width="1.5"/>
<path d="M5 20V11L8 17Z" fill="#ff0000"/><rect x="4.5" y="10" width="3" height="10" fill="#ff0000"/>
<rect x="8" y="4" width="2.5" height="14" fill="#1e88f0"/>
<rect x="11" y="2" width="3" height="10" fill="#ff0000"/>
<rect x="13.5" y="6" width="2.5" height="10" fill="#1e88f0"/>
<rect x="16.5" y="4" width="3" height="12" fill="#ff0000"/>
</svg>
<div class="ui" style="left:47px;top:12px;font-size:19px;color:#101010;transform:scaleX(0.99);transform-origin:0 0;letter-spacing:-0.3px">金1分足[2025/12]1.00 - 白金1分足[2025/12]1.00</div>
<svg class="a" style="left:1874px;top:10px" width="130" height="28" viewBox="0 0 130 28">
<defs><linearGradient id="btng" x1="0" y1="0" x2="0" y2="1"><stop offset="0" stop-color="#fafafa"/><stop offset="0.5" stop-color="#e8e8e8"/><stop offset="1" stop-color="#d0d0d0"/></linearGradient></defs>
<rect x="4" y="3" width="18" height="19" fill="#f2f2f2" stroke="#808080" stroke-width="1.3"/>
<rect x="8.5" y="8" width="15" height="13" fill="#e8e8e8" stroke="#707070" stroke-width="1.3"/>
<g stroke="#a0a0a0" stroke-width="0.8"><line x1="10" y1="12" x2="22" y2="12"/><line x1="10" y1="16" x2="22" y2="16"/><line x1="13" y1="9" x2="13" y2="20"/><line x1="17" y1="9" x2="17" y2="20"/></g>
<rect x="37.5" y="0.5" width="26" height="26" rx="4" fill="url(#btng)" stroke="#9a9a9a"/>
<rect x="45" y="15.5" width="10" height="2.5" fill="#505050"/>
<rect x="68.5" y="0.5" width="26" height="26" rx="4" fill="url(#btng)" stroke="#9a9a9a"/>
<rect x="77" y="7" width="10" height="11" fill="none" stroke="#505050" stroke-width="2"/>
<rect x="99.5" y="0.5" width="26" height="26" rx="4" fill="url(#btng)" stroke="#9a9a9a"/>
<path d="M107 7L119 19M119 7L107 19" stroke="#505050" stroke-width="2.2"/>
</svg>
<div class="ui" style="top:48px;font-size:19px;color:#1a1a2a;left:17px">金</div>
<div class="ui" style="top:48px;font-size:19px;color:#1a1a2a;left:53px;transform:scaleX(0.93);transform-origin:0 0">2025/12</div>
<div class="ui" style="top:48px;font-size:19px;color:#1a1a2a;left:222px">白金</div>
<div class="ui" style="top:48px;font-size:19px;color:#1a1a2a;left:277px;transform:scaleX(0.93);transform-origin:0 0">2025/12</div>
<div class="ui" style="top:48px;font-size:19px;color:#1a1a2a;left:446px">分足</div>
<div class="ui" style="top:48px;font-size:19px;color:#1a1a2a;left:587px;letter-spacing:-1px">1分足</div>
<div class="a" style="left:127px;top:43.5px;width:77px;height:28px;background:#fff;border:1px solid #c4c8d0;border-radius:2px"></div><div class="ui" style="left:132px;top:46px;font-size:18px;color:#000;transform:scaleX(0.85);transform-origin:0 0">1.00</div><svg class="a" style="left:180px;top:46px" width="22" height="22" viewBox="0 0 22 22">
<rect x="0.5" y="0.5" width="20.5" height="10" fill="#f0f0f0" stroke="#b8b8b8"/>
<rect x="0.5" y="11.5" width="20.5" height="10" fill="#f0f0f0" stroke="#b8b8b8"/>
<path d="M6.5 8L10.8 3.2L15 8Z" fill="#000"/><path d="M6.5 14L10.8 18.8L15 14Z" fill="#000"/></svg>
<div class="a" style="left:350.5px;top:43.5px;width:76.5px;height:28px;background:#fff;border:1px solid #c4c8d0;border-radius:2px"></div><div class="ui" style="left:355.5px;top:46px;font-size:18px;color:#000;transform:scaleX(0.85);transform-origin:0 0">1.00</div><svg class="a" style="left:403px;top:46px" width="22" height="22" viewBox="0 0 22 22">
<rect x="0.5" y="0.5" width="20.5" height="10" fill="#f0f0f0" stroke="#b8b8b8"/>
<rect x="0.5" y="11.5" width="20.5" height="10" fill="#f0f0f0" stroke="#b8b8b8"/>
<path d="M6.5 8L10.8 3.2L15 8Z" fill="#000"/><path d="M6.5 14L10.8 18.8L15 14Z" fill="#000"/></svg>
<div class="a" style="left:507px;top:43.5px;width:72px;height:28px;background:#fff;border:1px solid #c4c8d0;border-radius:2px"></div><div class="ui" style="left:512px;top:46px;font-size:18px;color:#000;transform:scaleX(0.85);transform-origin:0 0">1200</div><svg class="a" style="left:555px;top:46px" width="22" height="22" viewBox="0 0 22 22">
<rect x="0.5" y="0.5" width="20.5" height="10" fill="#f0f0f0" stroke="#b8b8b8"/>
<rect x="0.5" y="11.5" width="20.5" height="10" fill="#f0f0f0" stroke="#b8b8b8"/>
<path d="M6.5 8L10.8 3.2L15 8Z" fill="#000"/><path d="M6.5 14L10.8 18.8L15 14Z" fill="#000"/></svg>
<svg class="a" style="left:492px;top:54px" width="10" height="6" viewBox="0 0 10 6"><path d="M0 0H9L4.5 5.5Z" fill="#000"/></svg>
<svg class="a" style="left:644px;top:54px" width="10" height="6" viewBox="0 0 10 6"><path d="M0 0H9L4.5 5.5Z" fill="#000"/></svg>
<svg class="a" style="left:897px;top:54px" width="10" height="6" viewBox="0 0 10 6"><path d="M0 0H9L4.5 5.5Z" fill="#000"/></svg>
<div class="a" style="left:210px;top:50px;width:2.5px;height:19px;background:#f4f4f4;border-left:1px solid #b8bcc4"></div>
<div class="a" style="left:433px;top:50px;width:2.5px;height:19px;background:#f4f4f4;border-left:1px solid #b8bcc4"></div>
<div class="a" style="left:663.5px;top:50px;width:2.5px;height:19px;background:#f4f4f4;border-left:1px solid #b8bcc4"></div>
<div class="a" style="left:708.5px;top:50px;width:2.5px;height:19px;background:#f4f4f4;border-left:1px solid #b8bcc4"></div>
<div class="a" style="left:861.5px;top:50px;width:2.5px;height:19px;background:#f4f4f4;border-left:1px solid #b8bcc4"></div>
<div class="a" style="left:952px;top:50px;width:2.5px;height:19px;background:#f4f4f4;border-left:1px solid #b8bcc4"></div>
<div class="a" style="left:669px;top:43px;width:26.5px;height:27.5px;background:#b4b8bc;border-top:2px solid #7c7c7c;border-left:2px solid #7c7c7c;border-bottom:1.5px solid #fafafa;border-right:1.5px solid #fafafa"></div>
<div class="a" style="left:714.5px;top:43px;width:26.0px;height:27.5px;background:#b4b8bc;border-top:2px solid #7c7c7c;border-left:2px solid #7c7c7c;border-bottom:1.5px solid #fafafa;border-right:1.5px solid #fafafa"></div>
<svg class="a" style="left:671px;top:45px" width="24" height="24" viewBox="0 0 24 24">
<rect x="1" y="1" width="21" height="22" fill="#f4f4ee"/>
<g stroke="#c8c8c0" stroke-width="0.7"><line x1="1" y1="4" x2="22" y2="4"/><line x1="1" y1="7" x2="22" y2="7"/><line x1="1" y1="10" x2="22" y2="10"/><line x1="1" y1="13" x2="22" y2="13"/><line x1="1" y1="16" x2="22" y2="16"/><line x1="1" y1="19" x2="22" y2="19"/></g>
<line x1="5" y1="1" x2="5" y2="23" stroke="#4040b0" stroke-width="1.4"/><line x1="1" y1="9" x2="22" y2="9" stroke="#4040b0" stroke-width="1.4"/>
<path d="M19 21L12 14M11 13V19M11 13H17" stroke="#9020b0" stroke-width="2.4" fill="none"/>
</svg>
<svg class="a" style="left:717px;top:47px" width="22" height="22" viewBox="0 0 22 22">
<path d="M2.5 2L19 9.5L12.5 11L19.5 18L17.5 20L10.5 13L8.5 19.5Z" fill="#f0eefa" stroke="#6a50d0" stroke-width="1.8" stroke-linejoin="round"/>
</svg>
<svg class="a" style="left:751px;top:45px" width="23" height="24" viewBox="0 0 23 24">
<path d="M6 22.5C4 20 1.5 17 0.9 15.2C0.4 13.6 1.9 12.6 3.1 13.6L5.6 15.6L4.1 8.2C3.7 6.3 6 5.7 6.6 7.4L8.2 12L7.4 4.6C7.2 2.8 9.5 2.5 9.8 4.3L11 11L10.8 2.9C10.8 1.1 13.2 1.1 13.3 2.9L13.8 11.2L14.8 4.8C15.1 3.1 17.4 3.5 17.2 5.2L16.8 12.6C16.7 17 16.2 20 15 22.5Z" fill="#fff4dc" stroke="#dc8c10" stroke-width="1.7" stroke-linejoin="round"/>
</svg>
<svg class="a" style="left:786px;top:45px" width="25" height="24" viewBox="0 0 25 24">
<path d="M6 18.5L20.5 4" stroke="#e39818" stroke-width="6.2" stroke-linecap="round"/>
<path d="M7 17.5L20 4.5" stroke="#fde9c4" stroke-width="2.6" stroke-linecap="round"/>
<path d="M1.5 22.5L3.2 17L7 20.8Z" fill="#b87010"/>
</svg>
<svg class="a" style="left:822px;top:45px" width="26" height="25" viewBox="0 0 26 25">
<path d="M5.5 18.5L20.5 3.5" stroke="#2a6ee8" stroke-width="6.2" stroke-linecap="round"/>
<path d="M6.5 17.5L20 4" stroke="#d8e6fc" stroke-width="2.6" stroke-linecap="round"/>
<path d="M0.8 22.8L2.8 17.2L6.8 21.2Z" fill="#1a4cc0"/>
<path d="M18 12L23.8 17.8L18 23.6L12.2 17.8Z" fill="#14306e"/>
<g fill="#8aa0d0"><rect x="16" y="15.6" width="1.2" height="1.2"/><rect x="18.8" y="15.6" width="1.2" height="1.2"/><rect x="16" y="18.6" width="1.2" height="1.2"/><rect x="18.8" y="18.6" width="1.2" height="1.2"/></g>
</svg>
<svg class="a" style="left:869px;top:46px" width="24" height="24" viewBox="0 0 24 24">
<rect x="1" y="1" width="21" height="21" fill="#f0f0ea"/>
<g stroke="#d0d0c8" stroke-width="0.7"><line x1="1" y1="5" x2="22" y2="5"/><line x1="1" y1="9" x2="22" y2="9"/><line x1="1" y1="13" x2="22" y2="13"/><line x1="1" y1="17" x2="22" y2="17"/></g>
<path d="M1 1V22.5H23" fill="none" stroke="#707070" stroke-width="1.3"/>
<rect x="4" y="13" width="2.5" height="9" fill="#1e88f0"/><rect x="8" y="4" width="2.5" height="18" fill="#1e88f0"/><rect x="12" y="9" width="2.5" height="13" fill="#1e88f0"/><rect x="16" y="14" width="2.5" height="8" fill="#1e88f0"/>
</svg>
<svg class="a" style="left:913px;top:46px" width="24" height="24" viewBox="0 0 24 24">
<rect x="1" y="1" width="21" height="21" fill="#f0f0ea"/>
<g stroke="#d0d0c8" stroke-width="0.7"><line x1="1" y1="5" x2="22" y2="5"/><line x1="1" y1="9" x2="22" y2="9"/><line x1="1" y1="13" x2="22" y2="13"/><line x1="1" y1="17" x2="22" y2="17"/></g>
<path d="M1 1V22.5H23" fill="none" stroke="#707070" stroke-width="1.3"/>
<rect x="4" y="11" width="2.5" height="11" fill="#1e88f0"/><rect x="9" y="3" width="2.5" height="19" fill="#1e88f0"/><rect x="13" y="8" width="2.5" height="14" fill="#1e88f0"/><rect x="17" y="12" width="2.5" height="10" fill="#1e88f0"/>
<path d="M3 4L21 20M21 4L3 20" stroke="#ff2020" stroke-width="1.8"/>
</svg>
<svg class="a" style="left:958px;top:44px" width="26" height="26" viewBox="0 0 26 26">
<path d="M9.5 6A8.2 8.2 0 1 0 18 22.5" fill="none" stroke="#1e8ef0" stroke-width="3.4"/>
<path d="M4.5 1.5L13 5.2L6.5 11Z" fill="#1e8ef0"/>
<text x="13.2" y="16" font-family="Liberation Sans" font-weight="bold" font-size="13" fill="#1a6ad8">R</text>
</svg>
<svg class="a" style="left:1964px;top:45px" width="26" height="24" viewBox="0 0 26 24">
<path d="M3.5 20.5L13 11" stroke="#4848f0" stroke-width="4.2" stroke-linecap="round"/>
<path d="M12 12.5C10 9 12.5 4.5 16.5 4L15 7.5L17.5 10L21.5 8.5C21 12.5 16.5 14.5 13 12.5Z" fill="#8080f8" stroke="#5050e8" stroke-width="1.4"/>
</svg>
<!--TOOLBAR-->
</body></html>
